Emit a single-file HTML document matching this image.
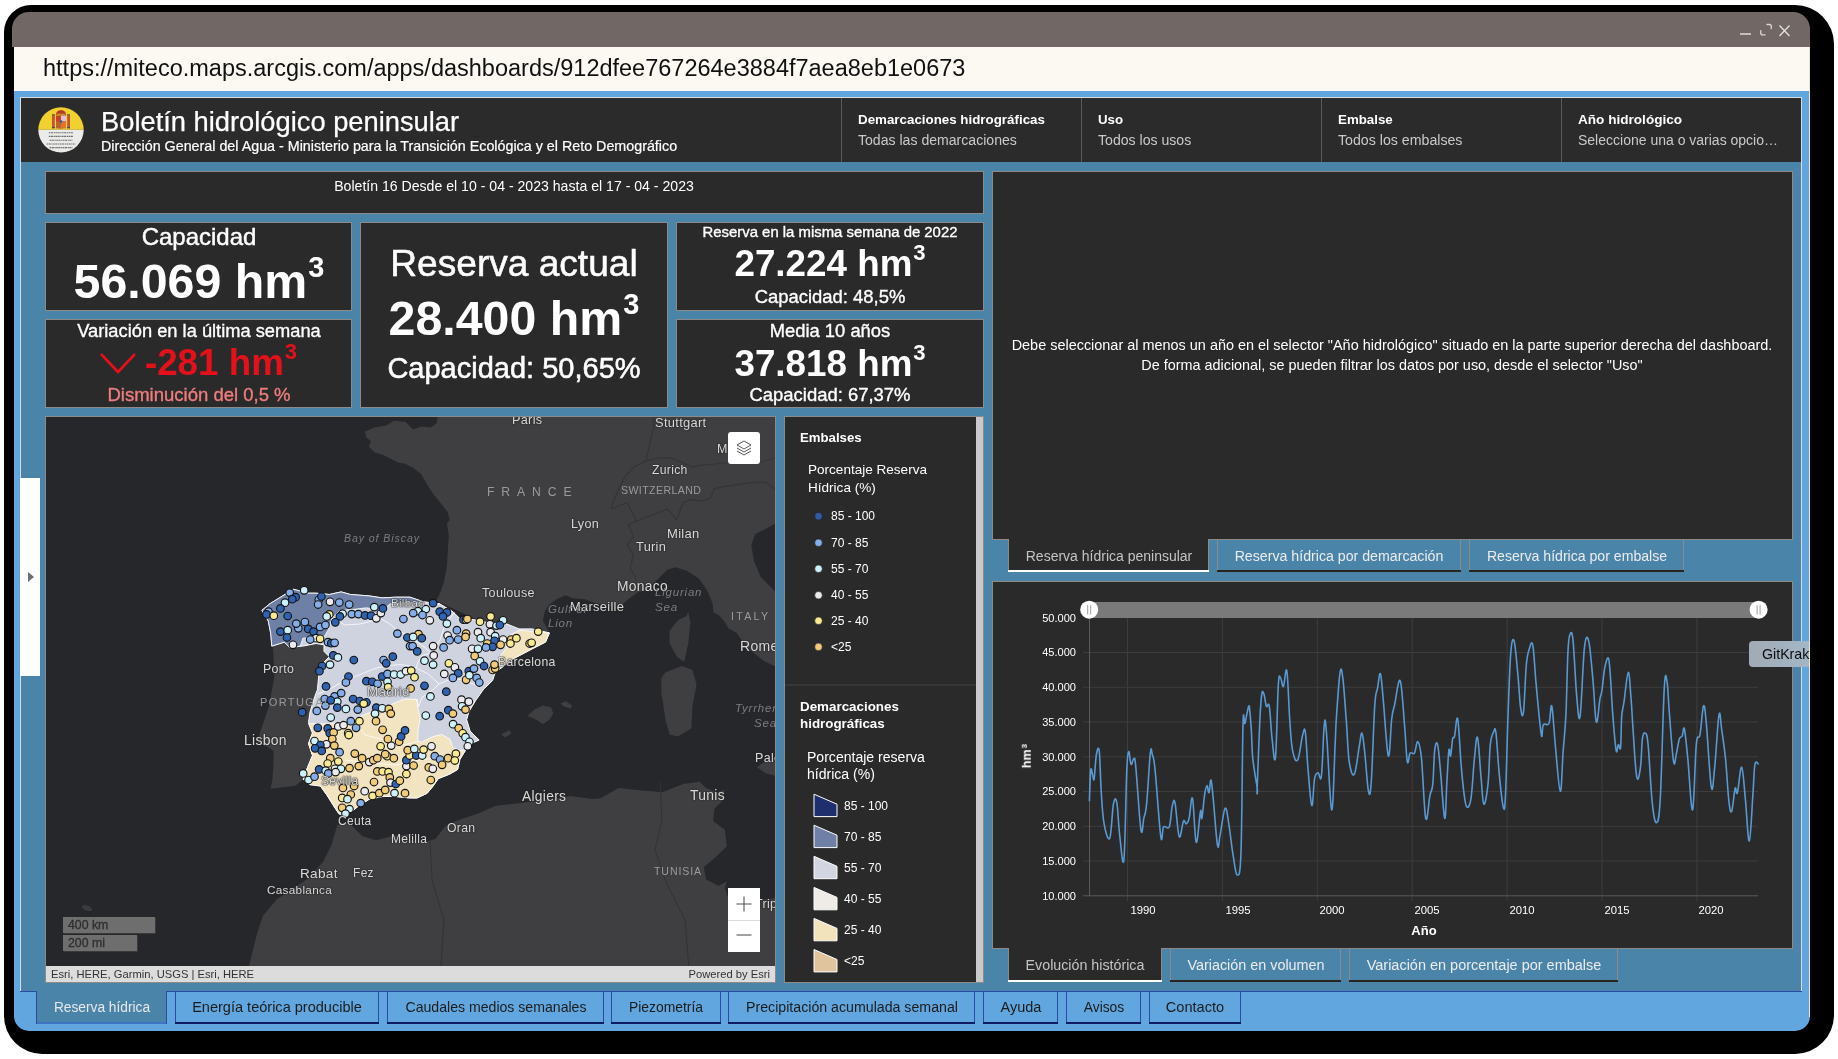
<!DOCTYPE html><html><head><meta charset="utf-8"><style>
html,body{margin:0;padding:0;}
body{width:1838px;height:1059px;overflow:hidden;position:relative;background:#fff;font-family:"Liberation Sans",sans-serif;}
.r{position:absolute;}
.t{position:absolute;white-space:nowrap;will-change:transform;}
svg{position:absolute;}
</style></head><body>
<div class="r" style="left:4px;top:5px;width:1830px;height:1049px;background:#000;border-radius:27px 39px 39px 38px;"></div>
<div class="r" style="left:12px;top:12px;width:1798px;height:35px;background:#716866;border-radius:17px 17px 0 0;"></div>
<svg style="left:1730px;top:18px" width="70" height="26" viewBox="1730 18 70 26">
<line x1="1740" y1="34" x2="1751" y2="34" stroke="#d8d4d2" stroke-width="1.6"/>
<path d="M1760.8 30.6 V33 Q1760.8 34.9 1762.7 34.9 H1765 M1767 24.5 H1769.4 Q1771.3 24.5 1771.3 26.4 V28.6" fill="none" stroke="#d8d4d2" stroke-width="1.35" stroke-linecap="round"/>
<path d="M1779.5 25.5 L1789.5 36 M1789.5 25.5 L1779.5 36" stroke="#e8e6e4" stroke-width="1.2"/>
</svg>
<div class="r" style="left:14px;top:47px;width:1796px;height:44px;background:#fcf9f2;"></div>
<div class="t" style="left:43.0px;top:57.1px;font-size:23.5px;line-height:23.5px;color:#111;font-weight:400;">https://miteco.maps.arcgis.com/apps/dashboards/912dfee767264e3884f7aea8eb1e0673</div>
<div class="r" style="left:14px;top:91px;width:1796px;height:940px;background:#62a6e0;border-radius:0 0 15px 15px;"></div>
<div class="r" style="left:1809px;top:47px;width:1px;height:970px;background:#e6e2da;"></div>
<div class="r" style="left:20px;top:97px;width:1782px;height:894px;background:#dcdcdc;"></div>
<div class="r" style="left:21px;top:98px;width:1780px;height:64px;background:#2b2b2b;"></div>
<div class="r" style="left:21px;top:162px;width:1780px;height:829px;background:#4b84a9;"></div>
<svg style="left:36px;top:105px" width="50" height="50" viewBox="0 0 50 50">
<defs><clipPath id="lc"><circle cx="25" cy="24.9" r="22.7"/></clipPath></defs>
<g clip-path="url(#lc)">
<rect x="0" y="0" width="50" height="24.8" fill="#f1d12f"/>
<rect x="0" y="24.8" width="50" height="26" fill="#ebebea"/>
</g>
<path d="M20 10.4 H30 V19 Q30 23.4 25 23.6 Q20 23.4 20 19 Z" fill="#c9402a"/>
<rect x="25" y="10.4" width="5" height="6" fill="#d8c6d6"/>
<rect x="20" y="16.4" width="5" height="7" fill="#b8642e"/>
<rect x="25" y="16.4" width="5" height="7" fill="#e0742a"/>
<circle cx="25" cy="16.6" r="1.3" fill="#3a5a90"/>
<path d="M19.8 10.2 Q20 5.5 25 5 Q30 5.5 30.2 10.2 Z" fill="#b83a28"/>
<rect x="20.5" y="8.6" width="9" height="1.6" fill="#c0902a"/>
<rect x="16" y="10" width="2.8" height="13" fill="#c8503a"/>
<rect x="31.2" y="10" width="2.8" height="13" fill="#c8503a"/>
<rect x="16" y="9" width="2.8" height="2" fill="#807030"/>
<rect x="31.2" y="9" width="2.8" height="2" fill="#807030"/>
<rect x="16" y="22" width="2.8" height="1.4" fill="#3a4a70"/>
<rect x="31.2" y="22" width="2.8" height="1.4" fill="#3a4a70"/>
<g stroke="#6e6e6e" stroke-width="1.1" stroke-dasharray="1.6 0.5 2.2 0.6 1.2 0.5">
<line x1="12.8" y1="27.8" x2="37.2" y2="27.8"/>
<line x1="12.8" y1="31.4" x2="37.2" y2="31.4"/>
<line x1="13.6" y1="35.2" x2="36.4" y2="35.2"/>
<line x1="10.6" y1="39" x2="39.4" y2="39"/>
<line x1="13.6" y1="42.6" x2="36.4" y2="42.6"/>
</g></svg>
<div class="t" style="left:101.0px;top:108.3px;font-size:27.3px;line-height:27.3px;color:#fff;font-weight:400;-webkit-text-stroke:0.25px currentColor;">Boletín hidrológico peninsular</div>
<div class="t" style="left:101.0px;top:138.5px;font-size:14.3px;line-height:14.3px;color:#fff;font-weight:400;-webkit-text-stroke:0.2px currentColor;">Dirección General del Agua - Ministerio para la Transición Ecológica y el Reto Demográfico</div>
<div class="r" style="left:841px;top:98px;width:1px;height:64px;background:#5a5a5a;"></div>
<div class="t" style="left:858.0px;top:112.7px;font-size:13.35px;line-height:13.35px;color:#fff;font-weight:700;">Demarcaciones hidrográficas</div>
<div class="t" style="left:858.0px;top:133.1px;font-size:14.09px;line-height:14.09px;color:#c9c9c9;font-weight:400;">Todas las demarcaciones</div>
<div class="r" style="left:1081px;top:98px;width:1px;height:64px;background:#5a5a5a;"></div>
<div class="t" style="left:1098.0px;top:112.7px;font-size:13.3px;line-height:13.3px;color:#fff;font-weight:700;">Uso</div>
<div class="t" style="left:1098.0px;top:133.1px;font-size:14.1px;line-height:14.1px;color:#c9c9c9;font-weight:400;">Todos los usos</div>
<div class="r" style="left:1321px;top:98px;width:1px;height:64px;background:#5a5a5a;"></div>
<div class="t" style="left:1338.0px;top:112.7px;font-size:13.32px;line-height:13.32px;color:#fff;font-weight:700;">Embalse</div>
<div class="t" style="left:1338.0px;top:133.0px;font-size:14.18px;line-height:14.18px;color:#c9c9c9;font-weight:400;">Todos los embalses</div>
<div class="r" style="left:1561px;top:98px;width:1px;height:64px;background:#5a5a5a;"></div>
<div class="t" style="left:1578.0px;top:112.5px;font-size:13.59px;line-height:13.59px;color:#fff;font-weight:700;">Año hidrológico</div>
<div class="t" style="left:1578.0px;top:133.1px;font-size:14.0px;line-height:14.0px;color:#c9c9c9;font-weight:400;">Seleccione una o varias opcio…</div>
<div class="r" style="left:45px;top:171px;width:939px;height:43px;background:#8d8a88;"></div>
<div class="r" style="left:46px;top:172px;width:937px;height:41px;background:#2a2a2a;"></div>
<div class="t" style="left:-86.0px;width:1200px;text-align:center;top:178.8px;font-size:14.1px;line-height:14.1px;color:#fff;font-weight:400;">Boletín 16 Desde el 10 - 04 - 2023 hasta el 17 - 04 - 2023</div>
<div class="r" style="left:45px;top:222px;width:307px;height:89px;background:#8d8a88;"></div>
<div class="r" style="left:46px;top:223px;width:305px;height:87px;background:#2a2a2a;"></div>
<div class="t" style="left:-401.5px;width:1200px;text-align:center;top:225.1px;font-size:24.0px;line-height:24.0px;color:#fff;font-weight:400;-webkit-text-stroke:0.45px currentColor;">Capacidad</div>
<div class="t" style="left:-401.5px;width:1200px;text-align:center;top:256.8px;font-size:48.3px;line-height:48.3px;color:#fff;font-weight:700;">56.069 hm<sup style="font-size:0.6em;vertical-align:0;position:relative;top:-0.72em;margin-left:0.04em">3</sup></div>
<div class="r" style="left:45px;top:319px;width:307px;height:89px;background:#8d8a88;"></div>
<div class="r" style="left:46px;top:320px;width:305px;height:87px;background:#2a2a2a;"></div>
<div class="t" style="left:-401.5px;width:1200px;text-align:center;top:321.8px;font-size:18.3px;line-height:18.3px;color:#fff;font-weight:400;-webkit-text-stroke:0.35px currentColor;">Variación en la última semana</div>
<div class="t" style="left:-379.0px;width:1200px;text-align:center;top:344.8px;font-size:36.8px;line-height:36.8px;color:#e4111b;font-weight:700;">-281 hm<sup style="font-size:0.6em;vertical-align:0;position:relative;top:-0.72em;margin-left:0.04em">3</sup></div>
<svg style="left:98px;top:350px" width="42" height="28" viewBox="0 0 42 28"><path d="M3 4 L20 22 L37 4" fill="none" stroke="#e4111b" stroke-width="2.6"/></svg>
<div class="t" style="left:-401.5px;width:1200px;text-align:center;top:385.8px;font-size:18.5px;line-height:18.5px;color:#f07d7d;font-weight:400;-webkit-text-stroke:0.35px currentColor;">Disminución del 0,5 %</div>
<div class="r" style="left:360px;top:222px;width:308px;height:186px;background:#8d8a88;"></div>
<div class="r" style="left:361px;top:223px;width:306px;height:184px;background:#2a2a2a;"></div>
<div class="t" style="left:-86.5px;width:1200px;text-align:center;top:245.4px;font-size:37.1px;line-height:37.1px;color:#fff;font-weight:400;-webkit-text-stroke:0.55px currentColor;">Reserva actual</div>
<div class="t" style="left:-86.5px;width:1200px;text-align:center;top:293.6px;font-size:48.3px;line-height:48.3px;color:#fff;font-weight:700;">28.400 hm<sup style="font-size:0.6em;vertical-align:0;position:relative;top:-0.72em;margin-left:0.04em">3</sup></div>
<div class="t" style="left:-86.5px;width:1200px;text-align:center;top:354.0px;font-size:29.0px;line-height:29.0px;color:#fff;font-weight:400;-webkit-text-stroke:0.55px currentColor;">Capacidad: 50,65%</div>
<div class="r" style="left:676px;top:222px;width:308px;height:89px;background:#8d8a88;"></div>
<div class="r" style="left:677px;top:223px;width:306px;height:87px;background:#2a2a2a;"></div>
<div class="t" style="left:230.0px;width:1200px;text-align:center;top:224.6px;font-size:14.9px;line-height:14.9px;color:#fff;font-weight:400;-webkit-text-stroke:0.35px currentColor;">Reserva en la misma semana de 2022</div>
<div class="t" style="left:230.0px;width:1200px;text-align:center;top:246.2px;font-size:36.8px;line-height:36.8px;color:#fff;font-weight:700;">27.224 hm<sup style="font-size:0.6em;vertical-align:0;position:relative;top:-0.72em;margin-left:0.04em">3</sup></div>
<div class="t" style="left:230.0px;width:1200px;text-align:center;top:287.6px;font-size:18.43px;line-height:18.43px;color:#fff;font-weight:400;-webkit-text-stroke:0.35px currentColor;">Capacidad: 48,5%</div>
<div class="r" style="left:676px;top:319px;width:308px;height:89px;background:#8d8a88;"></div>
<div class="r" style="left:677px;top:320px;width:306px;height:87px;background:#2a2a2a;"></div>
<div class="t" style="left:230.0px;width:1200px;text-align:center;top:321.7px;font-size:18.38px;line-height:18.38px;color:#fff;font-weight:400;-webkit-text-stroke:0.35px currentColor;">Media 10 años</div>
<div class="t" style="left:230.0px;width:1200px;text-align:center;top:346.3px;font-size:36.8px;line-height:36.8px;color:#fff;font-weight:700;">37.818 hm<sup style="font-size:0.6em;vertical-align:0;position:relative;top:-0.72em;margin-left:0.04em">3</sup></div>
<div class="t" style="left:230.0px;width:1200px;text-align:center;top:386.1px;font-size:18.47px;line-height:18.47px;color:#fff;font-weight:400;-webkit-text-stroke:0.35px currentColor;">Capacidad: 67,37%</div>
<div class="r" style="left:45px;top:416px;width:731px;height:567px;background:#8d8a88;"></div>
<div class="r" style="left:46px;top:417px;width:729px;height:565px;background:#26272b;"></div>
<svg style="left:46px;top:417px" width="729" height="565" viewBox="46 417 729 565">
<rect x="46" y="417" width="729" height="565" fill="#26272b"/>
<path d="M438.2 416.0 L776.0 416.0 L776.0 523.3 L766.0 528.7 L755.3 534.0 L751.3 544.8 L754.0 560.9 L760.7 577.0 L771.4 587.7 L776.0 593.0 L776.0 666.5 L771.5 664.7 L764.0 661.0 L756.4 654.9 L748.9 648.9 L741.3 639.8 L736.8 633.0 L728.5 628.5 L724.7 621.7 L718.7 614.9 L713.4 612.6 L712.6 603.6 L709.6 596.0 L706.5 589.4 L698.7 578.6 L686.9 570.8 L675.2 567.3 L667.3 569.8 L657.5 579.6 L647.7 589.4 L637.9 592.3 L628.1 599.2 L623.3 604.1 L608.6 606.0 L594.8 603.1 L585.0 599.2 L572.3 598.2 L565.5 595.3 L556.7 599.2 L549.8 604.1 L544.9 610.9 L542.9 620.7 L548.8 631.2 L520.0 640.0 L441.7 603.2 L436.3 600.8 L440.1 593.1 L444.0 581.6 L446.9 566.2 L447.8 550.8 L448.8 535.4 L446.9 523.8 L449.7 520.0 L447.8 512.3 L440.1 502.6 L432.4 493.0 L426.6 483.4 L420.9 473.8 L413.2 468.0 L405.5 464.1 L397.7 462.2 L390.0 458.4 L382.4 454.5 L374.7 452.6 L368.9 446.8 L370.8 441.0 L366.0 437.2 L365.0 431.4 L374.7 427.6 L386.2 425.6 L393.9 420.8 L405.5 421.8 L413.2 429.5 L420.9 426.6 L430.5 427.6 L436.3 423.7 L438.2 416.0 Z" fill="#3f3f42" />
<path d="M261.9 610.4 L269.8 603.8 L287.0 593.2 L293.6 589.3 L308.2 593.2 L316.1 593.2 L329.3 594.5 L341.2 591.9 L350.5 594.5 L369.0 595.9 L382.2 597.9 L395.5 597.2 L410.0 597.2 L423.8 601.9 L439.7 603.8 L452.9 611.7 L459.5 618.3 L474.0 619.7 L486.0 622.3 L505.8 623.6 L519.0 628.9 L532.2 628.9 L549.4 632.9 L545.5 642.1 L532.2 648.8 L512.4 659.3 L495.2 672.6 L492.6 680.5 L483.7 689.1 L475.7 700.4 L468.9 711.7 L466.7 719.7 L470.1 731.0 L479.1 740.1 L471.2 743.5 L465.5 750.3 L459.9 759.3 L457.6 769.5 L449.7 774.1 L438.3 778.6 L432.7 786.6 L427.0 793.4 L416.8 798.0 L409.0 797.9 L395.8 796.5 L382.6 796.5 L369.3 799.2 L358.8 805.8 L352.1 811.1 L345.5 816.4 L338.9 813.7 L333.6 805.8 L327.0 795.2 L320.4 786.0 L309.8 784.6 L303.2 779.3 L303.2 779.3 L295.4 785.7 L279.5 787.7 L270.6 788.7 L272.5 778.8 L273.5 762.9 L273.5 751.0 L267.6 747.1 L257.7 743.1 L259.7 733.2 L264.6 719.3 L268.6 707.4 L271.6 691.6 L274.5 675.7 L273.5 655.9 L272.5 640.0 L271.8 646.1 L270.8 633.8 L268.3 621.0 Z" fill="#3f3f42" />
<path d="M249.0 965.7 L251.8 954.7 L257.3 932.6 L262.8 916.1 L276.6 899.5 L293.1 888.5 L309.7 877.5 L323.5 860.9 L331.7 844.4 L337.3 825.1 L348.3 822.3 L362.1 836.1 L375.9 840.3 L392.4 836.1 L415.0 833.4 L405.0 838.9 L421.5 843.0 L435.3 838.9 L446.4 825.1 L460.1 819.6 L476.7 814.1 L496.0 805.8 L520.8 803.0 L542.9 800.3 L570.4 796.1 L592.5 798.9 L600.0 798.4 L618.7 788.0 L637.4 790.1 L662.3 792.2 L683.1 783.9 L699.7 781.8 L706.0 788.0 L716.4 792.2 L724.7 790.1 L722.6 800.5 L714.3 808.8 L713.2 821.3 L724.7 829.6 L726.8 846.2 L716.4 856.6 L703.9 867.0 L706.0 879.5 L718.4 885.7 L726.8 881.6 L724.7 887.8 L728.8 900.0 L745.0 902.0 L776.0 898.0 L776.0 982.0 L249.0 982.0 Z" fill="#3f3f42" />
<ellipse cx="87" cy="908" rx="5.5" ry="2.6" transform="rotate(20 87 908)" fill="#3a3a3d"/>
<path d="M669.6 630.7 L677.9 620.3 L686.3 616.1 L688.3 612.0 L690.4 622.3 L688.3 643.1 L684.2 661.8 L677.9 657.7 L673.8 651.4 L669.6 643.1 Z" fill="#3f3f42" />
<path d="M661.3 678.5 L665.5 672.2 L682.1 666.0 L692.5 670.1 L696.6 684.7 L692.5 705.5 L691.4 728.3 L677.9 736.6 L669.6 734.6 L665.5 720.0 L663.4 705.5 L661.3 693.0 Z" fill="#3f3f42" />
<path d="M527.3 715.9 L534.5 709.6 L542.9 705.5 L551.2 707.5 L553.3 713.8 L549.1 720.0 L542.9 724.2 L536.6 720.0 Z" fill="#3f3f42" />
<path d="M560.5 703.4 L565.7 701.3 L572.0 705.5 L570.9 708.6 L563.6 706.5 Z" fill="#3f3f42" />
<path d="M501.5 734.1 L509.8 730.0 L511.1 734.1 L504.3 737.4 Z" fill="#3f3f42" />
<path d="M756.9 767.3 L764.2 762.1 L776.0 759.0 L776.0 775.6 L766.2 773.5 Z" fill="#3f3f42" />
<path d="M653.5 416 L653.5 428.4 L648.9 447 L645.8 460.9" fill="none" stroke="#353538" stroke-width="1.2"/>
<path d="M645.8 460.9 L659.7 457.8 L670.5 457.8 L682.9 462.5 L692.2 467.1 L698.4 465.6 L713.9 464 L729.4 462.5 L744.9 460.9 L760 462 L776 458" fill="none" stroke="#353538" stroke-width="1.2"/>
<path d="M776 490 L766 482 L752.6 482.6 L729.4 485.7 L713.9 488.8 L710.8 498.1 L701.5 501.2 L690.7 499.6 L682.9 502.7 L676.7 519.8 L667.4 508.9 L651.9 515.1 L636.5 521.3 L627.2 502.7 L611.7 508.9 L613.2 501.2 L624.1 477.9 L633.4 467.1 L645.8 460.9" fill="none" stroke="#353538" stroke-width="1.2"/>
<path d="M636.5 521.3 L628.7 524.4 L633.4 536.8 L627.2 544.5 L633.4 555.4 L630.3 567.8 L636.5 580" fill="none" stroke="#353538" stroke-width="1.2"/>
<path d="M660 782 L662 820 L655 850 L665 880 L685 920 L690 982" fill="none" stroke="#333336" stroke-width="1"/>
<path d="M430 840 L432 880 L444 920 L440 982" fill="none" stroke="#333336" stroke-width="1"/>
<path d="M261.9 610.4 L269.8 603.8 L287.0 593.2 L293.6 589.3 L308.2 593.2 L316.1 593.2 L329.3 594.5 L341.2 591.9 L350.5 594.5 L369.0 595.9 L382.2 597.9 L395.5 597.2 L410.0 597.2 L423.8 601.9 L439.7 603.8 L452.9 611.7 L459.5 618.3 L474.0 619.7 L486.0 622.3 L505.8 623.6 L519.0 628.9 L532.2 628.9 L549.4 632.9 L545.5 642.1 L532.2 648.8 L512.4 659.3 L495.2 672.6 L492.6 680.5 L483.7 689.1 L475.7 700.4 L468.9 711.7 L466.7 719.7 L470.1 731.0 L479.1 740.1 L471.2 743.5 L465.5 750.3 L459.9 759.3 L457.6 769.5 L449.7 774.1 L438.3 778.6 L432.7 786.6 L427.0 793.4 L416.8 798.0 L409.0 797.9 L395.8 796.5 L382.6 796.5 L369.3 799.2 L358.8 805.8 L352.1 811.1 L345.5 816.4 L338.9 813.7 L333.6 805.8 L327.0 795.2 L320.4 786.0 L309.8 784.6 L303.2 779.3 L305.9 771.4 L312.5 755.5 L308.5 743.6 L312.5 733.0 L308.5 722.5 L310.0 712.0 L314.8 696.4 L317.4 689.8 L318.8 675.2 L320.1 666.0 L329.3 656.7 L324.0 651.4 L324.0 644.8 L316.1 643.5 L302.9 646.1 L289.7 647.4 L284.4 642.1 L271.8 646.1 L270.8 633.8 L268.3 621.0 Z" fill="#cfd3e0" stroke="#ffffff" stroke-width="1"/>
<path d="M261.9 610.4 L269.8 603.8 L287.0 593.2 L293.6 589.3 L308.2 593.2 L316.1 593.2 L329.3 594.5 L341.2 591.9 L350.5 594.5 L369.0 595.9 L382.2 597.9 L395.5 597.2 L410.0 597.2 L423.8 601.9 L439.7 603.8 L410.0 602.5 L390.2 603.8 L382.2 610.4 L366.4 607.8 L355.8 609.1 L339.9 610.4 L332.0 618.3 L328.0 630.2 L324.0 636.9 L302.9 638.2 L300.2 646.1 L289.7 647.4 L284.4 642.1 L271.8 646.1 L270.8 633.8 L268.3 621.0 Z" fill="#6f80a7" stroke="#ffffff" stroke-width="0.8"/>
<path d="M308.5 723.5 L329.7 724.0 L353.5 719.5 L366.0 714.0 L382.6 707.9 L395.8 702.6 L404.0 699.0 L416.8 699.3 L417.9 708.3 L420.2 717.4 L417.9 731.0 L418.0 741.2 L421.3 742.3 L432.7 736.7 L441.7 734.4 L449.7 739.0 L453.1 748.0 L459.9 750.3 L465.5 750.3 L459.9 759.3 L457.6 769.5 L449.7 774.1 L438.3 778.6 L432.7 786.6 L427.0 793.4 L416.8 798.0 L409.0 797.9 L395.8 796.5 L382.6 796.5 L369.3 799.2 L358.8 805.8 L352.1 811.1 L345.5 816.4 L338.9 813.7 L333.6 805.8 L327.0 795.2 L320.4 786.0 L309.8 784.6 L303.2 779.3 L305.9 771.4 L312.5 755.5 L308.5 743.6 L312.5 733.0 Z" fill="#f2e3c1" stroke="#ffffff" stroke-width="0.8"/>
<path d="M549.4 632.9 L519.0 630.2 L509.7 635.5 L505.8 648.8 L497.9 659.3 L492.6 672.6 L495.2 672.6 L512.4 659.3 L532.2 648.8 L545.5 642.1 Z" fill="#f2e3c1" stroke="#ffffff" stroke-width="0.8"/>
<path d="M381.0 619.0 L388.0 622.7 L393.7 627.2 L399.3 631.7 L406.0 634.0 L418.6 643.0 L426.6 648.7 L431.0 653.3 L422.0 655.5 L417.5 663.5 L416.3 668.0" fill="none" stroke="#ffffff" stroke-width="0.9" opacity="0.85"/>
<path d="M318.0 694.0 L331.3 688.4 L342.7 681.6 L354.0 677.0 L365.3 672.5 L376.7 668.0 L388.0 665.7 L399.3 664.6 L408.4 665.7 L416.3 668.0" fill="none" stroke="#ffffff" stroke-width="0.9" opacity="0.85"/>
<path d="M416.3 668.0 L427.7 673.7 L439.0 683.9 L433.4 689.5 L422.0 697.5 L418.6 706.6 L417.0 699.0" fill="none" stroke="#ffffff" stroke-width="0.9" opacity="0.85"/>
<path d="M439.0 683.9 L450.4 679.3 L461.7 679.3 L467.4 681.6 L478.0 686.0" fill="none" stroke="#ffffff" stroke-width="0.9" opacity="0.85"/>
<path d="M332.0 618.3 L345.0 625.0 L360.0 624.0 L375.0 620.0 L381.0 619.0" fill="none" stroke="#ffffff" stroke-width="0.9" opacity="0.85"/>
<path d="M454.4 612.1 L445.0 625.0 L440.0 640.0 L431.0 653.3" fill="none" stroke="#ffffff" stroke-width="0.9" opacity="0.85"/>
<path d="M355.0 721.0 L365.0 735.0 L385.0 740.0 L405.0 745.0 L418.0 741.2" fill="none" stroke="#ffffff" stroke-width="0.9" opacity="0.85"/>
<path d="M345.0 760.0 L370.0 763.0 L395.0 765.0 L420.0 760.0 L440.0 757.0 L459.9 759.3" fill="none" stroke="#ffffff" stroke-width="0.9" opacity="0.85"/>
<circle cx="289.7" cy="592.6" r="3.8" fill="#85ade8" stroke="#141414" stroke-width="1.15"/>
<circle cx="304.2" cy="590.3" r="3.8" fill="#cdf1fb" stroke="#141414" stroke-width="1.15"/>
<circle cx="295.6" cy="597.2" r="3.8" fill="#3062b2" stroke="#141414" stroke-width="1.15"/>
<circle cx="292.3" cy="599.2" r="3.8" fill="#3062b2" stroke="#141414" stroke-width="1.15"/>
<circle cx="285.0" cy="602.7" r="3.8" fill="#cdf1fb" stroke="#141414" stroke-width="1.15"/>
<circle cx="280.4" cy="608.4" r="3.8" fill="#3062b2" stroke="#141414" stroke-width="1.15"/>
<circle cx="268.5" cy="611.7" r="3.8" fill="#85ade8" stroke="#141414" stroke-width="1.15"/>
<circle cx="266.5" cy="614.4" r="3.8" fill="#3062b2" stroke="#141414" stroke-width="1.15"/>
<circle cx="273.8" cy="615.7" r="3.8" fill="#f7ea90" stroke="#141414" stroke-width="1.15"/>
<circle cx="287.7" cy="616.0" r="3.8" fill="#3062b2" stroke="#141414" stroke-width="1.15"/>
<circle cx="318.8" cy="599.8" r="3.8" fill="#85ade8" stroke="#141414" stroke-width="1.15"/>
<circle cx="321.4" cy="596.5" r="3.8" fill="#3062b2" stroke="#141414" stroke-width="1.15"/>
<circle cx="318.1" cy="604.5" r="3.8" fill="#85ade8" stroke="#141414" stroke-width="1.15"/>
<circle cx="330.0" cy="601.8" r="3.8" fill="#ebebef" stroke="#141414" stroke-width="1.15"/>
<circle cx="339.3" cy="602.5" r="3.8" fill="#85ade8" stroke="#141414" stroke-width="1.15"/>
<circle cx="349.2" cy="604.5" r="3.8" fill="#85ade8" stroke="#141414" stroke-width="1.15"/>
<circle cx="329.3" cy="614.4" r="3.8" fill="#f7ea90" stroke="#141414" stroke-width="1.15"/>
<circle cx="326.7" cy="616.4" r="3.8" fill="#cdf1fb" stroke="#141414" stroke-width="1.15"/>
<circle cx="342.6" cy="613.7" r="3.8" fill="#cdf1fb" stroke="#141414" stroke-width="1.15"/>
<circle cx="339.9" cy="616.4" r="3.8" fill="#3062b2" stroke="#141414" stroke-width="1.15"/>
<circle cx="335.3" cy="622.3" r="3.8" fill="#3062b2" stroke="#141414" stroke-width="1.15"/>
<circle cx="351.8" cy="614.1" r="3.8" fill="#85ade8" stroke="#141414" stroke-width="1.15"/>
<circle cx="358.4" cy="614.1" r="3.8" fill="#85ade8" stroke="#141414" stroke-width="1.15"/>
<circle cx="365.0" cy="615.4" r="3.8" fill="#3062b2" stroke="#141414" stroke-width="1.15"/>
<circle cx="371.0" cy="615.7" r="3.8" fill="#3062b2" stroke="#141414" stroke-width="1.15"/>
<circle cx="376.3" cy="618.3" r="3.8" fill="#ebebef" stroke="#141414" stroke-width="1.15"/>
<circle cx="380.9" cy="613.1" r="3.8" fill="#ebebef" stroke="#141414" stroke-width="1.15"/>
<circle cx="374.3" cy="607.1" r="3.8" fill="#cdf1fb" stroke="#141414" stroke-width="1.15"/>
<circle cx="382.9" cy="608.4" r="3.8" fill="#3062b2" stroke="#141414" stroke-width="1.15"/>
<circle cx="403.4" cy="619.0" r="3.8" fill="#85ade8" stroke="#141414" stroke-width="1.15"/>
<circle cx="397.4" cy="633.6" r="3.8" fill="#85ade8" stroke="#141414" stroke-width="1.15"/>
<circle cx="407.4" cy="637.5" r="3.8" fill="#3062b2" stroke="#141414" stroke-width="1.15"/>
<circle cx="410.0" cy="646.1" r="3.8" fill="#85ade8" stroke="#141414" stroke-width="1.15"/>
<circle cx="298.3" cy="628.3" r="3.8" fill="#85ade8" stroke="#141414" stroke-width="1.15"/>
<circle cx="304.9" cy="622.0" r="3.8" fill="#85ade8" stroke="#141414" stroke-width="1.15"/>
<circle cx="280.4" cy="631.6" r="3.8" fill="#3062b2" stroke="#141414" stroke-width="1.15"/>
<circle cx="287.7" cy="630.2" r="3.8" fill="#cdf1fb" stroke="#141414" stroke-width="1.15"/>
<circle cx="287.0" cy="637.5" r="3.8" fill="#3062b2" stroke="#141414" stroke-width="1.15"/>
<circle cx="296.3" cy="623.6" r="3.8" fill="#85ade8" stroke="#141414" stroke-width="1.15"/>
<circle cx="308.2" cy="628.9" r="3.8" fill="#3062b2" stroke="#141414" stroke-width="1.15"/>
<circle cx="313.5" cy="631.6" r="3.8" fill="#3062b2" stroke="#141414" stroke-width="1.15"/>
<circle cx="320.1" cy="626.9" r="3.8" fill="#85ade8" stroke="#141414" stroke-width="1.15"/>
<circle cx="325.4" cy="625.0" r="3.8" fill="#85ade8" stroke="#141414" stroke-width="1.15"/>
<circle cx="316.1" cy="638.2" r="3.8" fill="#ebebef" stroke="#141414" stroke-width="1.15"/>
<circle cx="320.1" cy="638.8" r="3.8" fill="#f7ea90" stroke="#141414" stroke-width="1.15"/>
<circle cx="310.2" cy="639.5" r="3.8" fill="#85ade8" stroke="#141414" stroke-width="1.15"/>
<circle cx="293.0" cy="644.8" r="3.8" fill="#ebebef" stroke="#141414" stroke-width="1.15"/>
<circle cx="328.0" cy="642.1" r="3.8" fill="#85ade8" stroke="#141414" stroke-width="1.15"/>
<circle cx="331.3" cy="643.2" r="3.8" fill="#3062b2" stroke="#141414" stroke-width="1.15"/>
<circle cx="334.6" cy="642.8" r="3.8" fill="#85ade8" stroke="#141414" stroke-width="1.15"/>
<circle cx="333.3" cy="655.4" r="3.8" fill="#3062b2" stroke="#141414" stroke-width="1.15"/>
<circle cx="337.9" cy="657.4" r="3.8" fill="#cdf1fb" stroke="#141414" stroke-width="1.15"/>
<circle cx="322.1" cy="666.0" r="3.8" fill="#3062b2" stroke="#141414" stroke-width="1.15"/>
<circle cx="319.4" cy="671.2" r="3.8" fill="#3062b2" stroke="#141414" stroke-width="1.15"/>
<circle cx="330.0" cy="664.6" r="3.8" fill="#cdf1fb" stroke="#141414" stroke-width="1.15"/>
<circle cx="353.8" cy="660.0" r="3.8" fill="#3062b2" stroke="#141414" stroke-width="1.15"/>
<circle cx="383.6" cy="660.0" r="3.8" fill="#85ade8" stroke="#141414" stroke-width="1.15"/>
<circle cx="386.2" cy="663.3" r="3.8" fill="#3062b2" stroke="#141414" stroke-width="1.15"/>
<circle cx="392.8" cy="656.7" r="3.8" fill="#3062b2" stroke="#141414" stroke-width="1.15"/>
<circle cx="348.5" cy="676.5" r="3.8" fill="#3062b2" stroke="#141414" stroke-width="1.15"/>
<circle cx="345.9" cy="682.5" r="3.8" fill="#85ade8" stroke="#141414" stroke-width="1.15"/>
<circle cx="326.0" cy="686.4" r="3.8" fill="#3062b2" stroke="#141414" stroke-width="1.15"/>
<circle cx="366.4" cy="681.2" r="3.8" fill="#3062b2" stroke="#141414" stroke-width="1.15"/>
<circle cx="372.3" cy="681.8" r="3.8" fill="#3062b2" stroke="#141414" stroke-width="1.15"/>
<circle cx="377.6" cy="683.8" r="3.8" fill="#85ade8" stroke="#141414" stroke-width="1.15"/>
<circle cx="382.2" cy="676.5" r="3.8" fill="#3062b2" stroke="#141414" stroke-width="1.15"/>
<circle cx="387.5" cy="673.9" r="3.8" fill="#85ade8" stroke="#141414" stroke-width="1.15"/>
<circle cx="394.1" cy="674.5" r="3.8" fill="#cdf1fb" stroke="#141414" stroke-width="1.15"/>
<circle cx="400.7" cy="674.5" r="3.8" fill="#cdf1fb" stroke="#141414" stroke-width="1.15"/>
<circle cx="406.0" cy="671.2" r="3.8" fill="#ebebef" stroke="#141414" stroke-width="1.15"/>
<circle cx="387.5" cy="681.8" r="3.8" fill="#cdf1fb" stroke="#141414" stroke-width="1.15"/>
<circle cx="388.2" cy="687.1" r="3.8" fill="#f7ea90" stroke="#141414" stroke-width="1.15"/>
<circle cx="324.7" cy="699.0" r="3.8" fill="#85ade8" stroke="#141414" stroke-width="1.15"/>
<circle cx="334.6" cy="696.4" r="3.8" fill="#85ade8" stroke="#141414" stroke-width="1.15"/>
<circle cx="341.2" cy="693.1" r="3.8" fill="#85ade8" stroke="#141414" stroke-width="1.15"/>
<circle cx="337.3" cy="701.7" r="3.8" fill="#cdf1fb" stroke="#141414" stroke-width="1.15"/>
<circle cx="330.7" cy="700.3" r="3.8" fill="#3062b2" stroke="#141414" stroke-width="1.15"/>
<circle cx="353.1" cy="699.0" r="3.8" fill="#3062b2" stroke="#141414" stroke-width="1.15"/>
<circle cx="359.8" cy="701.0" r="3.8" fill="#3062b2" stroke="#141414" stroke-width="1.15"/>
<circle cx="366.4" cy="702.3" r="3.8" fill="#3062b2" stroke="#141414" stroke-width="1.15"/>
<circle cx="363.7" cy="703.6" r="3.8" fill="#f7ea90" stroke="#141414" stroke-width="1.15"/>
<circle cx="345.9" cy="708.9" r="3.8" fill="#cdf1fb" stroke="#141414" stroke-width="1.15"/>
<circle cx="357.8" cy="709.6" r="3.8" fill="#85ade8" stroke="#141414" stroke-width="1.15"/>
<circle cx="337.3" cy="707.6" r="3.8" fill="#3062b2" stroke="#141414" stroke-width="1.15"/>
<circle cx="325.4" cy="705.6" r="3.8" fill="#85ade8" stroke="#141414" stroke-width="1.15"/>
<circle cx="316.8" cy="710.9" r="3.8" fill="#85ade8" stroke="#141414" stroke-width="1.15"/>
<circle cx="302.2" cy="712.2" r="3.8" fill="#3062b2" stroke="#141414" stroke-width="1.15"/>
<circle cx="376.3" cy="707.6" r="3.8" fill="#3062b2" stroke="#141414" stroke-width="1.15"/>
<circle cx="382.2" cy="708.3" r="3.8" fill="#cdf1fb" stroke="#141414" stroke-width="1.15"/>
<circle cx="375.0" cy="713.6" r="3.8" fill="#cdf1fb" stroke="#141414" stroke-width="1.15"/>
<circle cx="388.8" cy="708.9" r="3.8" fill="#f0cb78" stroke="#141414" stroke-width="1.15"/>
<circle cx="390.8" cy="713.6" r="3.8" fill="#f0cb78" stroke="#141414" stroke-width="1.15"/>
<circle cx="330.7" cy="717.5" r="3.8" fill="#cdf1fb" stroke="#141414" stroke-width="1.15"/>
<circle cx="433.1" cy="603.1" r="3.8" fill="#3062b2" stroke="#141414" stroke-width="1.15"/>
<circle cx="425.8" cy="609.1" r="3.8" fill="#cdf1fb" stroke="#141414" stroke-width="1.15"/>
<circle cx="417.9" cy="611.1" r="3.8" fill="#cdf1fb" stroke="#141414" stroke-width="1.15"/>
<circle cx="413.2" cy="613.1" r="3.8" fill="#85ade8" stroke="#141414" stroke-width="1.15"/>
<circle cx="422.5" cy="615.0" r="3.8" fill="#85ade8" stroke="#141414" stroke-width="1.15"/>
<circle cx="429.8" cy="620.3" r="3.8" fill="#ebebef" stroke="#141414" stroke-width="1.15"/>
<circle cx="439.7" cy="611.7" r="3.8" fill="#3062b2" stroke="#141414" stroke-width="1.15"/>
<circle cx="446.9" cy="612.4" r="3.8" fill="#3062b2" stroke="#141414" stroke-width="1.15"/>
<circle cx="443.0" cy="616.4" r="3.8" fill="#3062b2" stroke="#141414" stroke-width="1.15"/>
<circle cx="446.9" cy="623.6" r="3.8" fill="#cdf1fb" stroke="#141414" stroke-width="1.15"/>
<circle cx="463.5" cy="619.7" r="3.8" fill="#3062b2" stroke="#141414" stroke-width="1.15"/>
<circle cx="466.1" cy="619.7" r="3.8" fill="#f7ea90" stroke="#141414" stroke-width="1.15"/>
<circle cx="467.4" cy="619.0" r="3.8" fill="#f0cb78" stroke="#141414" stroke-width="1.15"/>
<circle cx="480.0" cy="621.7" r="3.8" fill="#f7ea90" stroke="#141414" stroke-width="1.15"/>
<circle cx="490.6" cy="616.4" r="3.8" fill="#f7ea90" stroke="#141414" stroke-width="1.15"/>
<circle cx="503.1" cy="620.3" r="3.8" fill="#cdf1fb" stroke="#141414" stroke-width="1.15"/>
<circle cx="489.9" cy="624.3" r="3.8" fill="#ebebef" stroke="#141414" stroke-width="1.15"/>
<circle cx="496.5" cy="625.6" r="3.8" fill="#cdf1fb" stroke="#141414" stroke-width="1.15"/>
<circle cx="499.8" cy="625.0" r="3.8" fill="#3062b2" stroke="#141414" stroke-width="1.15"/>
<circle cx="456.9" cy="630.2" r="3.8" fill="#85ade8" stroke="#141414" stroke-width="1.15"/>
<circle cx="466.1" cy="633.6" r="3.8" fill="#f0cb78" stroke="#141414" stroke-width="1.15"/>
<circle cx="465.5" cy="636.9" r="3.8" fill="#f0cb78" stroke="#141414" stroke-width="1.15"/>
<circle cx="447.6" cy="635.5" r="3.8" fill="#ebebef" stroke="#141414" stroke-width="1.15"/>
<circle cx="449.6" cy="640.2" r="3.8" fill="#85ade8" stroke="#141414" stroke-width="1.15"/>
<circle cx="458.2" cy="639.5" r="3.8" fill="#85ade8" stroke="#141414" stroke-width="1.15"/>
<circle cx="478.0" cy="632.2" r="3.8" fill="#ebebef" stroke="#141414" stroke-width="1.15"/>
<circle cx="490.6" cy="632.2" r="3.8" fill="#ebebef" stroke="#141414" stroke-width="1.15"/>
<circle cx="480.7" cy="638.2" r="3.8" fill="#cdf1fb" stroke="#141414" stroke-width="1.15"/>
<circle cx="495.2" cy="636.2" r="3.8" fill="#cdf1fb" stroke="#141414" stroke-width="1.15"/>
<circle cx="494.5" cy="640.8" r="3.8" fill="#3062b2" stroke="#141414" stroke-width="1.15"/>
<circle cx="503.1" cy="639.5" r="3.8" fill="#ebebef" stroke="#141414" stroke-width="1.15"/>
<circle cx="511.1" cy="639.5" r="3.8" fill="#f0cb78" stroke="#141414" stroke-width="1.15"/>
<circle cx="516.4" cy="638.2" r="3.8" fill="#f7ea90" stroke="#141414" stroke-width="1.15"/>
<circle cx="510.4" cy="643.5" r="3.8" fill="#f7ea90" stroke="#141414" stroke-width="1.15"/>
<circle cx="487.3" cy="643.5" r="3.8" fill="#f0cb78" stroke="#141414" stroke-width="1.15"/>
<circle cx="492.6" cy="646.8" r="3.8" fill="#3062b2" stroke="#141414" stroke-width="1.15"/>
<circle cx="500.5" cy="644.8" r="3.8" fill="#f0cb78" stroke="#141414" stroke-width="1.15"/>
<circle cx="486.0" cy="647.4" r="3.8" fill="#85ade8" stroke="#141414" stroke-width="1.15"/>
<circle cx="472.1" cy="648.8" r="3.8" fill="#ebebef" stroke="#141414" stroke-width="1.15"/>
<circle cx="478.0" cy="648.8" r="3.8" fill="#cdf1fb" stroke="#141414" stroke-width="1.15"/>
<circle cx="474.7" cy="656.0" r="3.8" fill="#f0cb78" stroke="#141414" stroke-width="1.15"/>
<circle cx="480.0" cy="661.3" r="3.8" fill="#cdf1fb" stroke="#141414" stroke-width="1.15"/>
<circle cx="484.0" cy="666.0" r="3.8" fill="#3062b2" stroke="#141414" stroke-width="1.15"/>
<circle cx="538.2" cy="631.6" r="3.8" fill="#f7ea90" stroke="#141414" stroke-width="1.15"/>
<circle cx="529.6" cy="643.5" r="3.8" fill="#f0cb78" stroke="#141414" stroke-width="1.15"/>
<circle cx="531.6" cy="642.8" r="3.8" fill="#f7ea90" stroke="#141414" stroke-width="1.15"/>
<circle cx="418.5" cy="634.2" r="3.8" fill="#f0cb78" stroke="#141414" stroke-width="1.15"/>
<circle cx="413.2" cy="636.9" r="3.8" fill="#cdf1fb" stroke="#141414" stroke-width="1.15"/>
<circle cx="421.8" cy="638.2" r="3.8" fill="#3062b2" stroke="#141414" stroke-width="1.15"/>
<circle cx="412.6" cy="646.1" r="3.8" fill="#85ade8" stroke="#141414" stroke-width="1.15"/>
<circle cx="417.2" cy="651.4" r="3.8" fill="#3062b2" stroke="#141414" stroke-width="1.15"/>
<circle cx="433.1" cy="646.1" r="3.8" fill="#ebebef" stroke="#141414" stroke-width="1.15"/>
<circle cx="433.7" cy="655.4" r="3.8" fill="#ebebef" stroke="#141414" stroke-width="1.15"/>
<circle cx="443.6" cy="647.4" r="3.8" fill="#85ade8" stroke="#141414" stroke-width="1.15"/>
<circle cx="424.5" cy="660.7" r="3.8" fill="#cdf1fb" stroke="#141414" stroke-width="1.15"/>
<circle cx="433.1" cy="664.6" r="3.8" fill="#cdf1fb" stroke="#141414" stroke-width="1.15"/>
<circle cx="448.9" cy="663.3" r="3.8" fill="#f7ea90" stroke="#141414" stroke-width="1.15"/>
<circle cx="454.9" cy="667.3" r="3.8" fill="#ebebef" stroke="#141414" stroke-width="1.15"/>
<circle cx="458.2" cy="673.2" r="3.8" fill="#3062b2" stroke="#141414" stroke-width="1.15"/>
<circle cx="444.3" cy="673.9" r="3.8" fill="#ebebef" stroke="#141414" stroke-width="1.15"/>
<circle cx="452.9" cy="677.9" r="3.8" fill="#85ade8" stroke="#141414" stroke-width="1.15"/>
<circle cx="466.1" cy="679.8" r="3.8" fill="#f0cb78" stroke="#141414" stroke-width="1.15"/>
<circle cx="468.8" cy="671.2" r="3.8" fill="#3062b2" stroke="#141414" stroke-width="1.15"/>
<circle cx="469.4" cy="675.2" r="3.8" fill="#cdf1fb" stroke="#141414" stroke-width="1.15"/>
<circle cx="474.0" cy="668.6" r="3.8" fill="#85ade8" stroke="#141414" stroke-width="1.15"/>
<circle cx="476.7" cy="677.9" r="3.8" fill="#85ade8" stroke="#141414" stroke-width="1.15"/>
<circle cx="479.3" cy="682.5" r="3.8" fill="#85ade8" stroke="#141414" stroke-width="1.15"/>
<circle cx="492.6" cy="669.9" r="3.8" fill="#f0cb78" stroke="#141414" stroke-width="1.15"/>
<circle cx="495.2" cy="668.6" r="3.8" fill="#f0cb78" stroke="#141414" stroke-width="1.15"/>
<circle cx="494.5" cy="664.6" r="3.8" fill="#f0cb78" stroke="#141414" stroke-width="1.15"/>
<circle cx="411.2" cy="670.6" r="3.8" fill="#f7ea90" stroke="#141414" stroke-width="1.15"/>
<circle cx="414.5" cy="677.2" r="3.8" fill="#f7ea90" stroke="#141414" stroke-width="1.15"/>
<circle cx="410.6" cy="688.4" r="3.8" fill="#f0cb78" stroke="#141414" stroke-width="1.15"/>
<circle cx="424.5" cy="685.8" r="3.8" fill="#3062b2" stroke="#141414" stroke-width="1.15"/>
<circle cx="430.4" cy="696.4" r="3.8" fill="#cdf1fb" stroke="#141414" stroke-width="1.15"/>
<circle cx="446.3" cy="691.7" r="3.8" fill="#3062b2" stroke="#141414" stroke-width="1.15"/>
<circle cx="461.5" cy="699.7" r="3.8" fill="#ebebef" stroke="#141414" stroke-width="1.15"/>
<circle cx="468.8" cy="701.7" r="3.8" fill="#ebebef" stroke="#141414" stroke-width="1.15"/>
<circle cx="462.1" cy="706.3" r="3.8" fill="#cdf1fb" stroke="#141414" stroke-width="1.15"/>
<circle cx="465.5" cy="709.6" r="3.8" fill="#f0cb78" stroke="#141414" stroke-width="1.15"/>
<circle cx="448.3" cy="710.2" r="3.8" fill="#3062b2" stroke="#141414" stroke-width="1.15"/>
<circle cx="452.9" cy="713.6" r="3.8" fill="#f0cb78" stroke="#141414" stroke-width="1.15"/>
<circle cx="425.8" cy="715.5" r="3.8" fill="#cdf1fb" stroke="#141414" stroke-width="1.15"/>
<circle cx="439.7" cy="716.2" r="3.8" fill="#3062b2" stroke="#141414" stroke-width="1.15"/>
<circle cx="317.8" cy="727.8" r="3.8" fill="#3062b2" stroke="#141414" stroke-width="1.15"/>
<circle cx="327.7" cy="728.4" r="3.8" fill="#3062b2" stroke="#141414" stroke-width="1.15"/>
<circle cx="329.7" cy="733.1" r="3.8" fill="#3062b2" stroke="#141414" stroke-width="1.15"/>
<circle cx="333.6" cy="732.4" r="3.8" fill="#f0cb78" stroke="#141414" stroke-width="1.15"/>
<circle cx="338.3" cy="726.4" r="3.8" fill="#ebebef" stroke="#141414" stroke-width="1.15"/>
<circle cx="343.6" cy="725.1" r="3.8" fill="#ebebef" stroke="#141414" stroke-width="1.15"/>
<circle cx="350.8" cy="721.2" r="3.8" fill="#85ade8" stroke="#141414" stroke-width="1.15"/>
<circle cx="356.1" cy="727.8" r="3.8" fill="#85ade8" stroke="#141414" stroke-width="1.15"/>
<circle cx="359.4" cy="721.2" r="3.8" fill="#f7ea90" stroke="#141414" stroke-width="1.15"/>
<circle cx="348.2" cy="733.1" r="3.8" fill="#f7ea90" stroke="#141414" stroke-width="1.15"/>
<circle cx="348.8" cy="735.0" r="3.8" fill="#f7ea90" stroke="#141414" stroke-width="1.15"/>
<circle cx="314.5" cy="741.0" r="3.8" fill="#cdf1fb" stroke="#141414" stroke-width="1.15"/>
<circle cx="326.4" cy="744.3" r="3.8" fill="#ebebef" stroke="#141414" stroke-width="1.15"/>
<circle cx="320.4" cy="745.0" r="3.8" fill="#3062b2" stroke="#141414" stroke-width="1.15"/>
<circle cx="315.1" cy="748.3" r="3.8" fill="#3062b2" stroke="#141414" stroke-width="1.15"/>
<circle cx="321.7" cy="750.9" r="3.8" fill="#3062b2" stroke="#141414" stroke-width="1.15"/>
<circle cx="332.3" cy="739.0" r="3.8" fill="#f0cb78" stroke="#141414" stroke-width="1.15"/>
<circle cx="334.3" cy="745.6" r="3.8" fill="#f0cb78" stroke="#141414" stroke-width="1.15"/>
<circle cx="339.6" cy="752.2" r="3.8" fill="#85ade8" stroke="#141414" stroke-width="1.15"/>
<circle cx="354.8" cy="753.6" r="3.8" fill="#f0cb78" stroke="#141414" stroke-width="1.15"/>
<circle cx="362.1" cy="758.2" r="3.8" fill="#f0cb78" stroke="#141414" stroke-width="1.15"/>
<circle cx="369.3" cy="762.1" r="3.8" fill="#ebebef" stroke="#141414" stroke-width="1.15"/>
<circle cx="373.3" cy="760.2" r="3.8" fill="#f0cb78" stroke="#141414" stroke-width="1.15"/>
<circle cx="377.3" cy="758.2" r="3.8" fill="#f0cb78" stroke="#141414" stroke-width="1.15"/>
<circle cx="330.3" cy="758.2" r="3.8" fill="#f0cb78" stroke="#141414" stroke-width="1.15"/>
<circle cx="338.3" cy="761.5" r="3.8" fill="#f7ea90" stroke="#141414" stroke-width="1.15"/>
<circle cx="327.7" cy="763.5" r="3.8" fill="#f7ea90" stroke="#141414" stroke-width="1.15"/>
<circle cx="319.1" cy="769.4" r="3.8" fill="#3062b2" stroke="#141414" stroke-width="1.15"/>
<circle cx="325.7" cy="770.7" r="3.8" fill="#cdf1fb" stroke="#141414" stroke-width="1.15"/>
<circle cx="335.0" cy="768.8" r="3.8" fill="#ebebef" stroke="#141414" stroke-width="1.15"/>
<circle cx="340.9" cy="768.8" r="3.8" fill="#cdf1fb" stroke="#141414" stroke-width="1.15"/>
<circle cx="349.5" cy="768.1" r="3.8" fill="#f0cb78" stroke="#141414" stroke-width="1.15"/>
<circle cx="358.8" cy="766.1" r="3.8" fill="#f0cb78" stroke="#141414" stroke-width="1.15"/>
<circle cx="303.2" cy="773.4" r="3.8" fill="#cdf1fb" stroke="#141414" stroke-width="1.15"/>
<circle cx="308.5" cy="780.0" r="3.8" fill="#cdf1fb" stroke="#141414" stroke-width="1.15"/>
<circle cx="314.5" cy="776.7" r="3.8" fill="#85ade8" stroke="#141414" stroke-width="1.15"/>
<circle cx="328.3" cy="773.4" r="3.8" fill="#85ade8" stroke="#141414" stroke-width="1.15"/>
<circle cx="335.6" cy="772.1" r="3.8" fill="#ebebef" stroke="#141414" stroke-width="1.15"/>
<circle cx="342.9" cy="787.9" r="3.8" fill="#f0cb78" stroke="#141414" stroke-width="1.15"/>
<circle cx="354.1" cy="786.0" r="3.8" fill="#f0cb78" stroke="#141414" stroke-width="1.15"/>
<circle cx="350.8" cy="794.5" r="3.8" fill="#f0cb78" stroke="#141414" stroke-width="1.15"/>
<circle cx="342.2" cy="797.9" r="3.8" fill="#f7ea90" stroke="#141414" stroke-width="1.15"/>
<circle cx="347.5" cy="799.2" r="3.8" fill="#cdf1fb" stroke="#141414" stroke-width="1.15"/>
<circle cx="342.2" cy="807.8" r="3.8" fill="#f0cb78" stroke="#141414" stroke-width="1.15"/>
<circle cx="349.5" cy="809.1" r="3.8" fill="#cdf1fb" stroke="#141414" stroke-width="1.15"/>
<circle cx="345.5" cy="813.7" r="3.8" fill="#cdf1fb" stroke="#141414" stroke-width="1.15"/>
<circle cx="360.7" cy="803.1" r="3.8" fill="#85ade8" stroke="#141414" stroke-width="1.15"/>
<circle cx="364.7" cy="791.2" r="3.8" fill="#ebebef" stroke="#141414" stroke-width="1.15"/>
<circle cx="372.6" cy="795.9" r="3.8" fill="#f7ea90" stroke="#141414" stroke-width="1.15"/>
<circle cx="379.3" cy="793.2" r="3.8" fill="#f0cb78" stroke="#141414" stroke-width="1.15"/>
<circle cx="385.2" cy="789.9" r="3.8" fill="#f0cb78" stroke="#141414" stroke-width="1.15"/>
<circle cx="394.5" cy="793.2" r="3.8" fill="#cdf1fb" stroke="#141414" stroke-width="1.15"/>
<circle cx="405.0" cy="793.2" r="3.8" fill="#f0cb78" stroke="#141414" stroke-width="1.15"/>
<circle cx="374.0" cy="782.0" r="3.8" fill="#f0cb78" stroke="#141414" stroke-width="1.15"/>
<circle cx="377.3" cy="771.4" r="3.8" fill="#f0cb78" stroke="#141414" stroke-width="1.15"/>
<circle cx="382.6" cy="771.4" r="3.8" fill="#f7ea90" stroke="#141414" stroke-width="1.15"/>
<circle cx="388.5" cy="772.1" r="3.8" fill="#f7ea90" stroke="#141414" stroke-width="1.15"/>
<circle cx="389.8" cy="777.4" r="3.8" fill="#f0cb78" stroke="#141414" stroke-width="1.15"/>
<circle cx="390.5" cy="782.6" r="3.8" fill="#ebebef" stroke="#141414" stroke-width="1.15"/>
<circle cx="395.8" cy="784.0" r="3.8" fill="#3062b2" stroke="#141414" stroke-width="1.15"/>
<circle cx="399.8" cy="780.7" r="3.8" fill="#f0cb78" stroke="#141414" stroke-width="1.15"/>
<circle cx="387.2" cy="756.2" r="3.8" fill="#f7ea90" stroke="#141414" stroke-width="1.15"/>
<circle cx="393.8" cy="758.2" r="3.8" fill="#f0cb78" stroke="#141414" stroke-width="1.15"/>
<circle cx="385.2" cy="754.2" r="3.8" fill="#f0cb78" stroke="#141414" stroke-width="1.15"/>
<circle cx="380.6" cy="746.3" r="3.8" fill="#f7ea90" stroke="#141414" stroke-width="1.15"/>
<circle cx="391.2" cy="745.6" r="3.8" fill="#ebebef" stroke="#141414" stroke-width="1.15"/>
<circle cx="399.1" cy="741.7" r="3.8" fill="#f0cb78" stroke="#141414" stroke-width="1.15"/>
<circle cx="401.1" cy="736.4" r="3.8" fill="#3062b2" stroke="#141414" stroke-width="1.15"/>
<circle cx="405.0" cy="730.4" r="3.8" fill="#3062b2" stroke="#141414" stroke-width="1.15"/>
<circle cx="387.9" cy="739.0" r="3.8" fill="#f0cb78" stroke="#141414" stroke-width="1.15"/>
<circle cx="382.6" cy="729.8" r="3.8" fill="#f0cb78" stroke="#141414" stroke-width="1.15"/>
<circle cx="376.0" cy="721.2" r="3.8" fill="#f0cb78" stroke="#141414" stroke-width="1.15"/>
<circle cx="406.4" cy="766.1" r="3.8" fill="#ebebef" stroke="#141414" stroke-width="1.15"/>
<circle cx="406.4" cy="774.0" r="3.8" fill="#f7ea90" stroke="#141414" stroke-width="1.15"/>
<circle cx="413.6" cy="765.5" r="3.8" fill="#f0cb78" stroke="#141414" stroke-width="1.15"/>
<circle cx="406.4" cy="760.2" r="3.8" fill="#3062b2" stroke="#141414" stroke-width="1.15"/>
<circle cx="409.7" cy="755.5" r="3.8" fill="#f7ea90" stroke="#141414" stroke-width="1.15"/>
<circle cx="416.3" cy="755.5" r="3.8" fill="#3062b2" stroke="#141414" stroke-width="1.15"/>
<circle cx="422.2" cy="755.5" r="3.8" fill="#cdf1fb" stroke="#141414" stroke-width="1.15"/>
<circle cx="407.7" cy="750.2" r="3.8" fill="#f0cb78" stroke="#141414" stroke-width="1.15"/>
<circle cx="414.3" cy="748.9" r="3.8" fill="#cdf1fb" stroke="#141414" stroke-width="1.15"/>
<circle cx="423.6" cy="749.6" r="3.8" fill="#f7ea90" stroke="#141414" stroke-width="1.15"/>
<circle cx="431.5" cy="746.3" r="3.8" fill="#ebebef" stroke="#141414" stroke-width="1.15"/>
<circle cx="434.8" cy="756.2" r="3.8" fill="#85ade8" stroke="#141414" stroke-width="1.15"/>
<circle cx="440.1" cy="759.5" r="3.8" fill="#85ade8" stroke="#141414" stroke-width="1.15"/>
<circle cx="442.1" cy="764.8" r="3.8" fill="#f0cb78" stroke="#141414" stroke-width="1.15"/>
<circle cx="448.0" cy="758.2" r="3.8" fill="#f0cb78" stroke="#141414" stroke-width="1.15"/>
<circle cx="428.8" cy="767.4" r="3.8" fill="#f0cb78" stroke="#141414" stroke-width="1.15"/>
<circle cx="432.8" cy="768.8" r="3.8" fill="#ebebef" stroke="#141414" stroke-width="1.15"/>
<circle cx="430.8" cy="780.0" r="3.8" fill="#f0cb78" stroke="#141414" stroke-width="1.15"/>
<circle cx="453.1" cy="724.2" r="3.8" fill="#cdf1fb" stroke="#141414" stroke-width="1.15"/>
<circle cx="458.7" cy="728.2" r="3.8" fill="#f0cb78" stroke="#141414" stroke-width="1.15"/>
<circle cx="462.7" cy="733.3" r="3.8" fill="#f7ea90" stroke="#141414" stroke-width="1.15"/>
<circle cx="465.5" cy="737.2" r="3.8" fill="#cdf1fb" stroke="#141414" stroke-width="1.15"/>
<circle cx="469.5" cy="741.8" r="3.8" fill="#cdf1fb" stroke="#141414" stroke-width="1.15"/>
<circle cx="467.8" cy="746.3" r="3.8" fill="#ebebef" stroke="#141414" stroke-width="1.15"/>
<circle cx="455.9" cy="753.7" r="3.8" fill="#f7ea90" stroke="#141414" stroke-width="1.15"/>
<circle cx="454.8" cy="760.5" r="3.8" fill="#f7ea90" stroke="#141414" stroke-width="1.15"/>
</svg>
<div class="r" style="left:46px;top:417px;width:729px;height:565px;overflow:hidden"><div class="r" style="left:-46px;top:-417px;width:1838px;height:1059px">
<div class="t" style="left:512.0px;top:414.0px;font-size:12.7px;line-height:12.7px;color:#d8d8d8;font-weight:400;letter-spacing:0.3px;text-shadow:0 0 1px #2a2a2a,0 0 1px #2a2a2a,0 0 2px #2a2a2a;">Paris</div>
<div class="t" style="left:655.0px;top:416.6px;font-size:12.9px;line-height:12.9px;color:#d8d8d8;font-weight:400;letter-spacing:0.3px;text-shadow:0 0 1px #2a2a2a,0 0 1px #2a2a2a,0 0 2px #2a2a2a;">Stuttgart</div>
<div class="t" style="left:716.6px;top:443.2px;font-size:12.5px;line-height:12.5px;color:#d8d8d8;font-weight:400;letter-spacing:0.3px;text-shadow:0 0 1px #2a2a2a,0 0 1px #2a2a2a,0 0 2px #2a2a2a;">M</div>
<div class="t" style="left:652.0px;top:464.3px;font-size:12.2px;line-height:12.2px;color:#d8d8d8;font-weight:400;letter-spacing:0.3px;text-shadow:0 0 1px #2a2a2a,0 0 1px #2a2a2a,0 0 2px #2a2a2a;">Zurich</div>
<div class="t" style="left:571.4px;top:518.2px;font-size:12.6px;line-height:12.6px;color:#d8d8d8;font-weight:400;letter-spacing:0.3px;text-shadow:0 0 1px #2a2a2a,0 0 1px #2a2a2a,0 0 2px #2a2a2a;">Lyon</div>
<div class="t" style="left:667.3px;top:526.6px;font-size:13.0px;line-height:13.0px;color:#d8d8d8;font-weight:400;letter-spacing:0.3px;text-shadow:0 0 1px #2a2a2a,0 0 1px #2a2a2a,0 0 2px #2a2a2a;">Milan</div>
<div class="t" style="left:635.5px;top:540.5px;font-size:12.8px;line-height:12.8px;color:#d8d8d8;font-weight:400;letter-spacing:0.3px;text-shadow:0 0 1px #2a2a2a,0 0 1px #2a2a2a,0 0 2px #2a2a2a;">Turin</div>
<div class="t" style="left:481.6px;top:587.2px;font-size:12.6px;line-height:12.6px;color:#d8d8d8;font-weight:400;letter-spacing:0.3px;text-shadow:0 0 1px #2a2a2a,0 0 1px #2a2a2a,0 0 2px #2a2a2a;">Toulouse</div>
<div class="t" style="left:616.9px;top:580.2px;font-size:13.8px;line-height:13.8px;color:#d8d8d8;font-weight:400;letter-spacing:0.3px;text-shadow:0 0 1px #2a2a2a,0 0 1px #2a2a2a,0 0 2px #2a2a2a;">Monaco</div>
<div class="t" style="left:570.3px;top:600.7px;font-size:12.87px;line-height:12.87px;color:#d8d8d8;font-weight:400;letter-spacing:0.3px;text-shadow:0 0 1px #2a2a2a,0 0 1px #2a2a2a,0 0 2px #2a2a2a;">Marseille</div>
<div class="t" style="left:739.6px;top:639.1px;font-size:14.0px;line-height:14.0px;color:#d8d8d8;font-weight:400;letter-spacing:0.3px;text-shadow:0 0 1px #2a2a2a,0 0 1px #2a2a2a,0 0 2px #2a2a2a;">Rome</div>
<div class="t" style="left:263.0px;top:662.5px;font-size:12.4px;line-height:12.4px;color:#d8d8d8;font-weight:400;letter-spacing:0.3px;text-shadow:0 0 1px #2a2a2a,0 0 1px #2a2a2a,0 0 2px #2a2a2a;">Porto</div>
<div class="t" style="left:497.5px;top:656.1px;font-size:12.2px;line-height:12.2px;color:#d8d8d8;font-weight:400;letter-spacing:0.3px;text-shadow:0 0 1px #2a2a2a,0 0 1px #2a2a2a,0 0 2px #2a2a2a;">Barcelona</div>
<div class="t" style="left:367.0px;top:685.2px;font-size:13.4px;line-height:13.4px;color:#d8d8d8;font-weight:400;letter-spacing:0.3px;text-shadow:0 0 1px #2a2a2a,0 0 1px #2a2a2a,0 0 2px #2a2a2a;">Madrid</div>
<div class="t" style="left:244.3px;top:733.5px;font-size:13.95px;line-height:13.95px;color:#d8d8d8;font-weight:400;letter-spacing:0.3px;text-shadow:0 0 1px #2a2a2a,0 0 1px #2a2a2a,0 0 2px #2a2a2a;">Lisbon</div>
<div class="t" style="left:755.0px;top:751.7px;font-size:12.5px;line-height:12.5px;color:#d8d8d8;font-weight:400;letter-spacing:0.3px;text-shadow:0 0 1px #2a2a2a,0 0 1px #2a2a2a,0 0 2px #2a2a2a;">Pale</div>
<div class="t" style="left:320.5px;top:775.1px;font-size:12.0px;line-height:12.0px;color:#d8d8d8;font-weight:400;letter-spacing:0.3px;text-shadow:0 0 1px #2a2a2a,0 0 1px #2a2a2a,0 0 2px #2a2a2a;">Sevilla</div>
<div class="t" style="left:522.1px;top:790.0px;font-size:13.8px;line-height:13.8px;color:#d8d8d8;font-weight:400;letter-spacing:0.3px;text-shadow:0 0 1px #2a2a2a,0 0 1px #2a2a2a,0 0 2px #2a2a2a;">Algiers</div>
<div class="t" style="left:690.3px;top:788.8px;font-size:13.9px;line-height:13.9px;color:#d8d8d8;font-weight:400;letter-spacing:0.3px;text-shadow:0 0 1px #2a2a2a,0 0 1px #2a2a2a,0 0 2px #2a2a2a;">Tunis</div>
<div class="t" style="left:337.5px;top:815.1px;font-size:12.0px;line-height:12.0px;color:#d8d8d8;font-weight:400;letter-spacing:0.3px;text-shadow:0 0 1px #2a2a2a,0 0 1px #2a2a2a,0 0 2px #2a2a2a;">Ceuta</div>
<div class="t" style="left:446.5px;top:821.5px;font-size:12.2px;line-height:12.2px;color:#d8d8d8;font-weight:400;letter-spacing:0.3px;text-shadow:0 0 1px #2a2a2a,0 0 1px #2a2a2a,0 0 2px #2a2a2a;">Oran</div>
<div class="t" style="left:390.6px;top:832.6px;font-size:12.0px;line-height:12.0px;color:#d8d8d8;font-weight:400;letter-spacing:0.3px;text-shadow:0 0 1px #2a2a2a,0 0 1px #2a2a2a,0 0 2px #2a2a2a;">Melilla</div>
<div class="t" style="left:299.7px;top:866.9px;font-size:13.6px;line-height:13.6px;color:#d8d8d8;font-weight:400;letter-spacing:0.3px;text-shadow:0 0 1px #2a2a2a,0 0 1px #2a2a2a,0 0 2px #2a2a2a;">Rabat</div>
<div class="t" style="left:353.4px;top:867.1px;font-size:12.0px;line-height:12.0px;color:#d8d8d8;font-weight:400;letter-spacing:0.3px;text-shadow:0 0 1px #2a2a2a,0 0 1px #2a2a2a,0 0 2px #2a2a2a;">Fez</div>
<div class="t" style="left:267.4px;top:883.8px;font-size:11.74px;line-height:11.74px;color:#d8d8d8;font-weight:400;letter-spacing:0.3px;text-shadow:0 0 1px #2a2a2a,0 0 1px #2a2a2a,0 0 2px #2a2a2a;">Casablanca</div>
<div class="t" style="left:755.0px;top:897.9px;font-size:12.5px;line-height:12.5px;color:#d8d8d8;font-weight:400;letter-spacing:0.3px;text-shadow:0 0 1px #2a2a2a,0 0 1px #2a2a2a,0 0 2px #2a2a2a;">Trip</div>
<div class="t" style="left:390.6px;top:597.5px;font-size:11.5px;line-height:11.5px;color:#d8d8d8;font-weight:400;letter-spacing:0.3px;text-shadow:0 0 1px #2a2a2a,0 0 1px #2a2a2a,0 0 2px #2a2a2a;">Bilbao</div>
<div class="t" style="left:486.5px;top:486.2px;font-size:12.2px;line-height:12.2px;color:#9a9a9a;font-weight:400;letter-spacing:6.9px;">FRANCE</div>
<div class="t" style="left:620.7px;top:484.8px;font-size:10.6px;line-height:10.6px;color:#9a9a9a;font-weight:400;letter-spacing:0.4px;">SWITZERLAND</div>
<div class="t" style="left:731.4px;top:610.8px;font-size:10.6px;line-height:10.6px;color:#9a9a9a;font-weight:400;letter-spacing:2.3px;">ITALY</div>
<div class="t" style="left:260.2px;top:696.5px;font-size:11.0px;line-height:11.0px;color:#9a9a9a;font-weight:400;letter-spacing:1.4px;">PORTUGAL</div>
<div class="t" style="left:653.6px;top:865.6px;font-size:10.6px;line-height:10.6px;color:#9a9a9a;font-weight:400;letter-spacing:0.9px;">TUNISIA</div>
<div class="t" style="left:344.0px;top:532.5px;font-size:10.6px;line-height:10.6px;color:#7c7c80;font-weight:400;font-style:italic;letter-spacing:0.9px;">Bay of Biscay</div>
<div class="t" style="left:548.4px;top:604.1px;font-size:11.5px;line-height:11.5px;color:#7c7c80;font-weight:400;font-style:italic;letter-spacing:0.8px;">Gulf of</div>
<div class="t" style="left:548.4px;top:618.3px;font-size:11.5px;line-height:11.5px;color:#7c7c80;font-weight:400;font-style:italic;letter-spacing:0.8px;">Lion</div>
<div class="t" style="left:654.7px;top:586.6px;font-size:11.5px;line-height:11.5px;color:#7c7c80;font-weight:400;font-style:italic;letter-spacing:0.8px;">Ligurian</div>
<div class="t" style="left:654.7px;top:601.9px;font-size:11.5px;line-height:11.5px;color:#7c7c80;font-weight:400;font-style:italic;letter-spacing:0.8px;">Sea</div>
<div class="t" style="left:734.7px;top:702.7px;font-size:11.5px;line-height:11.5px;color:#7c7c80;font-weight:400;font-style:italic;letter-spacing:0.8px;">Tyrrhen</div>
<div class="t" style="left:754.0px;top:718.1px;font-size:11.5px;line-height:11.5px;color:#7c7c80;font-weight:400;font-style:italic;letter-spacing:0.8px;">Sea</div>
</div></div>
<div class="r" style="left:63px;top:917px;width:92px;height:16px;background:#6e6e6e;box-shadow:1px 1px 0 0 #3a3a3a;"></div>
<div class="t" style="left:68.0px;top:919.1px;font-size:12.3px;line-height:12.3px;color:#2e2e2e;font-weight:400;-webkit-text-stroke:0.3px currentColor;">400 km</div>
<div class="r" style="left:63px;top:935px;width:74px;height:16px;background:#6e6e6e;box-shadow:1px 1px 0 0 #3a3a3a;"></div>
<div class="t" style="left:68.0px;top:937.1px;font-size:12.3px;line-height:12.3px;color:#2e2e2e;font-weight:400;-webkit-text-stroke:0.3px currentColor;">200 mi</div>
<div class="r" style="left:46px;top:966px;width:729px;height:16px;background:#dcdcdc;"></div>
<div class="t" style="left:50.5px;top:968.5px;font-size:11.2px;line-height:11.2px;color:#333;font-weight:400;">Esri, HERE, Garmin, USGS | Esri, HERE</div>
<div class="t" style="left:-430.0px;width:1200px;text-align:right;top:968.5px;font-size:11.2px;line-height:11.2px;color:#333;font-weight:400;">Powered by Esri</div>
<div class="r" style="left:728px;top:432px;width:32px;height:32px;background:#fff;border-radius:3px;"></div>
<svg style="left:734px;top:438px" width="20" height="20" viewBox="0 0 20 20"><path d="M10 3 L17 7 L10 11 L3 7 Z" fill="none" stroke="#555" stroke-width="1"/><path d="M3 10 L10 14 L17 10" fill="none" stroke="#555" stroke-width="1"/><path d="M3 13 L10 17 L17 13" fill="none" stroke="#555" stroke-width="1"/></svg>
<div class="r" style="left:728px;top:888px;width:32px;height:64px;background:#fff;"></div>
<div class="r" style="left:728px;top:920px;width:32px;height:1px;background:#dcdcdc;"></div>
<svg style="left:728px;top:888px" width="32" height="64" viewBox="0 0 32 64"><path d="M16 8.5 V23.5 M8.5 16 H23.5" stroke="#555" stroke-width="1.1"/><path d="M8.5 47 H23.5" stroke="#555" stroke-width="1.1"/></svg>
<div class="r" style="left:784px;top:416px;width:200px;height:567px;background:#8d8a88;"></div>
<div class="r" style="left:785px;top:417px;width:198px;height:565px;background:#2a2a2a;"></div>
<div class="r" style="left:976px;top:417px;width:7px;height:565px;background:#cacaca;"></div>
<div class="t" style="left:800.0px;top:430.8px;font-size:13.2px;line-height:13.2px;color:#fff;font-weight:700;">Embalses</div>
<div class="t" style="left:807.5px;top:462.8px;font-size:13.55px;line-height:13.55px;color:#fff;font-weight:400;">Porcentaje Reserva</div>
<div class="t" style="left:807.5px;top:480.7px;font-size:13.55px;line-height:13.55px;color:#fff;font-weight:400;">Hídrica (%)</div>
<svg style="left:784px;top:416px" width="200" height="566" viewBox="784 416 200 566">
<circle cx="818.5" cy="516.2" r="3.8" fill="#2d5ca8" stroke="#222" stroke-width="0.6"/>
<circle cx="818.5" cy="542.8" r="3.8" fill="#85ade8" stroke="#222" stroke-width="0.6"/>
<circle cx="818.5" cy="568.8" r="3.8" fill="#cdf1fb" stroke="#222" stroke-width="0.6"/>
<circle cx="818.5" cy="595.2" r="3.8" fill="#ebebef" stroke="#222" stroke-width="0.6"/>
<circle cx="818.5" cy="620.8" r="3.8" fill="#f7ea90" stroke="#222" stroke-width="0.6"/>
<circle cx="818.5" cy="646.9" r="3.8" fill="#f0cb78" stroke="#222" stroke-width="0.6"/>
<path d="M814 794.2 L837 804.2 L837 816.6 L814 816.6 Z" fill="#1f2e6c" stroke="#fff" stroke-width="1"/>
<path d="M814 825.2 L837 835.2 L837 847.6 L814 847.6 Z" fill="#6f7fa6" stroke="#fff" stroke-width="1"/>
<path d="M814 856.3 L837 866.3 L837 878.7 L814 878.7 Z" fill="#d3d5e1" stroke="#fff" stroke-width="1"/>
<path d="M814 887.4 L837 897.4 L837 909.8 L814 909.8 Z" fill="#efebe6" stroke="#fff" stroke-width="1"/>
<path d="M814 918.4 L837 928.4 L837 940.8 L814 940.8 Z" fill="#f3e3bd" stroke="#fff" stroke-width="1"/>
<path d="M814 949.5 L837 959.5 L837 971.9 L814 971.9 Z" fill="#dfc49d" stroke="#fff" stroke-width="1"/>
<line x1="785" y1="685" x2="976" y2="685" stroke="#444" stroke-width="1"/>
</svg>
<div class="t" style="left:831.0px;top:510.0px;font-size:12.0px;line-height:12.0px;color:#fff;font-weight:400;">85 - 100</div>
<div class="t" style="left:831.0px;top:536.6px;font-size:12.0px;line-height:12.0px;color:#fff;font-weight:400;">70 - 85</div>
<div class="t" style="left:831.0px;top:562.6px;font-size:12.0px;line-height:12.0px;color:#fff;font-weight:400;">55 - 70</div>
<div class="t" style="left:831.0px;top:589.0px;font-size:12.0px;line-height:12.0px;color:#fff;font-weight:400;">40 - 55</div>
<div class="t" style="left:831.0px;top:614.6px;font-size:12.0px;line-height:12.0px;color:#fff;font-weight:400;">25 - 40</div>
<div class="t" style="left:831.0px;top:640.7px;font-size:12.0px;line-height:12.0px;color:#fff;font-weight:400;">&lt;25</div>
<div class="t" style="left:800.0px;top:700.4px;font-size:13.39px;line-height:13.39px;color:#fff;font-weight:700;">Demarcaciones</div>
<div class="t" style="left:800.0px;top:717.1px;font-size:13.39px;line-height:13.39px;color:#fff;font-weight:700;">hidrográficas</div>
<div class="t" style="left:807.0px;top:749.7px;font-size:14.06px;line-height:14.06px;color:#fff;font-weight:400;">Porcentaje reserva</div>
<div class="t" style="left:807.0px;top:767.1px;font-size:14.06px;line-height:14.06px;color:#fff;font-weight:400;">hídrica (%)</div>
<div class="t" style="left:844.0px;top:799.8px;font-size:12.0px;line-height:12.0px;color:#fff;font-weight:400;">85 - 100</div>
<div class="t" style="left:844.0px;top:830.9px;font-size:12.0px;line-height:12.0px;color:#fff;font-weight:400;">70 - 85</div>
<div class="t" style="left:844.0px;top:861.9px;font-size:12.0px;line-height:12.0px;color:#fff;font-weight:400;">55 - 70</div>
<div class="t" style="left:844.0px;top:893.0px;font-size:12.0px;line-height:12.0px;color:#fff;font-weight:400;">40 - 55</div>
<div class="t" style="left:844.0px;top:924.0px;font-size:12.0px;line-height:12.0px;color:#fff;font-weight:400;">25 - 40</div>
<div class="t" style="left:844.0px;top:955.1px;font-size:12.0px;line-height:12.0px;color:#fff;font-weight:400;">&lt;25</div>
<div class="r" style="left:992px;top:171px;width:801px;height:369px;background:#8d8a88;"></div>
<div class="r" style="left:993px;top:172px;width:799px;height:367px;background:#2a2a2a;"></div>
<div class="t" style="left:792.0px;width:1200px;text-align:center;top:338.1px;font-size:14.45px;line-height:14.45px;color:#fff;font-weight:400;">Debe seleccionar al menos un año en el selector "Año hidrológico" situado en la parte superior derecha del dashboard.</div>
<div class="t" style="left:792.0px;width:1200px;text-align:center;top:357.5px;font-size:14.4px;line-height:14.4px;color:#fff;font-weight:400;">De forma adicional, se pueden filtrar los datos por uso, desde el selector "Uso"</div>
<div class="r" style="left:1008px;top:539px;width:201px;height:33px;background:#8d8a88;"></div>
<div class="r" style="left:1009px;top:539px;width:199px;height:31px;background:#2a2a2a;"></div>
<div class="r" style="left:1008px;top:570px;width:201px;height:2px;background:#fff;"></div>
<div class="t" style="left:508.5px;width:1200px;text-align:center;top:549.3px;font-size:14.0px;line-height:14.0px;color:#c4c4c4;font-weight:400;">Reserva hídrica peninsular</div>
<div class="r" style="left:1217px;top:539px;width:1px;height:33px;background:#8d8a88;"></div>
<div class="r" style="left:1460px;top:539px;width:1px;height:33px;background:#8d8a88;"></div>
<div class="r" style="left:1217px;top:570px;width:244px;height:2px;background:#2a2420;"></div>
<div class="t" style="left:739.0px;width:1200px;text-align:center;top:549.2px;font-size:14.18px;line-height:14.18px;color:#ececec;font-weight:400;">Reserva hídrica por demarcación</div>
<div class="r" style="left:1469px;top:539px;width:1px;height:33px;background:#8d8a88;"></div>
<div class="r" style="left:1683px;top:539px;width:1px;height:33px;background:#8d8a88;"></div>
<div class="r" style="left:1469px;top:570px;width:215px;height:2px;background:#2a2420;"></div>
<div class="t" style="left:976.5px;width:1200px;text-align:center;top:549.3px;font-size:14.1px;line-height:14.1px;color:#ececec;font-weight:400;">Reserva hídrica por embalse</div>
<div class="r" style="left:992px;top:581px;width:801px;height:368px;background:#8d8a88;"></div>
<div class="r" style="left:993px;top:582px;width:799px;height:366px;background:#2a2a2a;"></div>
<svg style="left:993px;top:582px" width="799" height="366" viewBox="993 582 799 366">
<line x1="1083" y1="652.5" x2="1758" y2="652.5" stroke="#3d3d3d" stroke-width="1"/>
<line x1="1083" y1="687.3" x2="1758" y2="687.3" stroke="#3d3d3d" stroke-width="1"/>
<line x1="1083" y1="722.0" x2="1758" y2="722.0" stroke="#3d3d3d" stroke-width="1"/>
<line x1="1083" y1="756.8" x2="1758" y2="756.8" stroke="#3d3d3d" stroke-width="1"/>
<line x1="1083" y1="791.5" x2="1758" y2="791.5" stroke="#3d3d3d" stroke-width="1"/>
<line x1="1083" y1="826.3" x2="1758" y2="826.3" stroke="#3d3d3d" stroke-width="1"/>
<line x1="1083" y1="861.0" x2="1758" y2="861.0" stroke="#3d3d3d" stroke-width="1"/>
<line x1="1127.5" y1="618" x2="1127.5" y2="901" stroke="#3d3d3d" stroke-width="1"/>
<line x1="1222.4" y1="618" x2="1222.4" y2="901" stroke="#3d3d3d" stroke-width="1"/>
<line x1="1317.3" y1="618" x2="1317.3" y2="901" stroke="#3d3d3d" stroke-width="1"/>
<line x1="1412.2" y1="618" x2="1412.2" y2="901" stroke="#3d3d3d" stroke-width="1"/>
<line x1="1507.1" y1="618" x2="1507.1" y2="901" stroke="#3d3d3d" stroke-width="1"/>
<line x1="1602.0" y1="618" x2="1602.0" y2="901" stroke="#3d3d3d" stroke-width="1"/>
<line x1="1696.9" y1="618" x2="1696.9" y2="901" stroke="#3d3d3d" stroke-width="1"/>
<line x1="1089.5" y1="618" x2="1089.5" y2="896" stroke="#5a5a5a" stroke-width="1"/>
<line x1="1083" y1="895.8" x2="1758" y2="895.8" stroke="#5a5a5a" stroke-width="1"/>
<path d="M1089.4 801.2 C1089.6 795.6 1090.2 774.7 1090.8 770.1 C1091.4 765.5 1092.1 774.2 1092.8 775.7 C1093.4 777.3 1093.5 782.4 1094.2 778.6 C1094.8 774.7 1095.5 759.3 1096.4 754.5 C1097.4 749.6 1098.4 744.8 1099.3 751.6 C1100.1 758.5 1100.4 779.7 1101.3 792.7 C1102.1 805.8 1102.6 815.8 1104.1 823.9 C1105.6 832.1 1108.1 841.7 1109.8 838.1 C1111.4 834.5 1112.2 810.5 1113.4 804.1 C1114.7 797.7 1115.7 797.1 1116.8 802.7 C1118.0 808.3 1118.4 825.1 1119.7 835.3 C1121.0 845.5 1122.7 871.1 1123.9 859.4 C1125.2 847.6 1125.9 789.5 1126.8 770.1 C1127.6 750.7 1128.0 752.7 1128.8 751.6 C1129.5 750.6 1130.1 763.1 1131.0 764.4 C1131.9 765.7 1133.0 758.2 1133.9 758.7 C1134.7 759.2 1134.6 754.5 1135.8 767.2 C1137.1 780.0 1139.5 820.4 1140.9 829.6 C1142.4 838.8 1142.8 822.8 1143.8 818.3 C1144.8 813.7 1145.4 815.8 1146.6 804.1 C1147.8 792.3 1149.3 762.0 1150.3 753.1 C1151.3 744.1 1151.4 751.4 1152.3 754.5 C1153.1 757.5 1153.6 755.3 1155.1 770.1 C1156.6 784.9 1159.3 826.5 1160.8 836.7 C1162.3 846.9 1162.1 828.5 1163.6 826.8 C1165.1 825.0 1167.8 830.3 1169.3 826.8 C1170.8 823.2 1171.1 811.3 1172.1 806.9 C1173.1 802.6 1173.7 797.3 1175.0 802.7 C1176.2 808.0 1177.7 833.4 1179.2 836.7 C1180.7 840.0 1182.2 823.4 1183.5 821.1 C1184.7 818.8 1185.3 824.4 1186.3 823.9 C1187.3 823.4 1188.0 822.8 1189.1 818.3 C1190.2 813.7 1191.3 794.1 1192.5 798.4 C1193.8 802.7 1194.8 840.1 1196.2 842.3 C1197.6 844.6 1199.4 815.5 1200.5 811.2 C1201.5 806.8 1201.1 821.3 1201.9 818.3 C1202.6 815.2 1203.8 800.0 1204.7 794.2 C1205.6 788.3 1206.2 785.9 1207.0 785.7 C1207.7 785.4 1208.3 793.8 1209.0 792.7 C1209.7 791.7 1210.2 779.0 1211.0 780.0 C1211.7 781.0 1212.0 786.7 1213.2 798.4 C1214.4 810.1 1216.2 838.8 1217.5 845.2 C1218.7 851.6 1218.9 840.5 1220.3 833.8 C1221.7 827.2 1223.6 810.1 1225.1 808.3 C1226.7 806.5 1227.4 815.5 1228.8 823.9 C1230.2 832.3 1231.5 845.9 1233.1 855.1 C1234.6 864.3 1235.9 875.5 1237.3 874.9 C1238.7 874.4 1240.0 879.3 1241.0 852.3 C1242.0 825.2 1242.3 747.9 1243.0 724.7 C1243.7 701.5 1243.9 726.6 1245.0 723.3 C1246.0 720.0 1247.7 708.1 1248.7 706.3 C1249.6 704.5 1249.5 708.5 1250.0 713.4 C1250.5 718.2 1251.0 725.1 1251.5 733.2 C1252.0 741.4 1251.8 749.0 1252.8 758.7 C1253.8 768.4 1256.3 782.0 1257.1 787.1 C1257.9 792.2 1256.6 799.3 1257.2 787.1 C1257.7 774.8 1259.1 735.9 1259.9 719.0 C1260.8 702.2 1261.1 697.9 1261.9 693.5 C1262.7 689.2 1263.4 692.7 1264.2 695.0 C1265.0 697.3 1265.5 704.3 1266.4 706.3 C1267.4 708.3 1268.3 700.4 1269.3 706.3 C1270.3 712.2 1271.0 729.7 1272.1 738.9 C1273.2 748.1 1274.4 767.0 1275.5 757.3 C1276.6 747.6 1277.4 699.3 1278.3 685.0 C1279.3 670.7 1279.7 677.7 1280.6 677.9 C1281.5 678.2 1282.3 687.7 1283.4 686.5 C1284.6 685.2 1285.7 665.0 1286.8 670.9 C1288.0 676.7 1288.7 704.8 1289.7 719.0 C1290.7 733.3 1291.1 742.8 1292.5 750.2 C1293.9 757.6 1295.8 762.7 1297.6 760.1 C1299.4 757.6 1301.1 741.2 1302.4 736.1 C1303.8 731.0 1304.3 725.7 1305.3 731.8 C1306.3 737.9 1306.9 756.8 1308.1 770.1 C1309.3 783.3 1310.6 804.0 1311.8 805.5 C1313.0 807.0 1313.5 784.4 1314.6 778.6 C1315.7 772.7 1316.8 773.4 1318.0 772.9 C1319.3 772.4 1320.3 784.4 1321.4 775.7 C1322.6 767.1 1323.3 732.4 1324.3 724.7 C1325.2 717.1 1325.2 717.9 1326.5 733.2 C1327.9 748.5 1330.1 807.2 1331.6 809.8 C1333.2 812.3 1334.2 764.2 1335.0 747.4 C1335.9 730.6 1335.5 729.7 1336.5 716.2 C1337.4 702.7 1339.0 678.9 1340.1 672.3 C1341.3 665.6 1341.8 670.4 1343.0 679.4 C1344.1 688.3 1345.2 707.1 1346.4 721.9 C1347.5 736.7 1347.8 752.1 1349.2 761.6 C1350.6 771.0 1352.5 776.9 1354.3 774.3 C1356.1 771.8 1357.7 754.8 1359.1 747.4 C1360.5 740.0 1360.9 732.2 1362.0 733.2 C1363.0 734.2 1363.6 742.6 1364.8 753.1 C1366.0 763.5 1367.3 786.2 1368.5 791.3 C1369.7 796.4 1370.2 796.7 1371.3 781.4 C1372.4 766.1 1373.6 723.1 1374.7 706.3 C1375.8 689.5 1376.5 693.7 1377.6 687.9 C1378.6 682.0 1379.4 671.7 1380.4 673.7 C1381.4 675.7 1381.8 684.4 1383.2 699.2 C1384.6 714.0 1386.8 752.3 1388.3 755.9 C1389.9 759.5 1390.6 728.2 1391.7 719.0 C1392.8 709.9 1393.0 711.8 1394.6 704.9 C1396.1 698.0 1398.4 677.2 1400.2 680.8 C1402.0 684.4 1403.2 710.2 1404.5 724.7 C1405.8 739.3 1406.3 756.5 1407.3 761.6 C1408.3 766.7 1408.9 754.6 1410.1 753.1 C1411.4 751.5 1413.0 755.1 1414.4 753.1 C1415.8 751.0 1416.5 740.7 1417.8 741.7 C1419.1 742.7 1420.1 745.0 1421.5 758.7 C1422.9 772.5 1424.2 811.6 1425.7 818.3 C1427.3 824.9 1428.7 801.7 1429.9 795.6 C1431.2 789.5 1431.9 792.4 1432.8 784.2 C1433.6 776.1 1433.9 757.4 1434.7 750.2 C1435.6 743.1 1436.6 741.0 1437.6 744.6 C1438.6 748.1 1439.1 756.8 1440.4 770.1 C1441.7 783.3 1443.5 816.2 1444.7 818.3 C1445.8 820.3 1446.2 793.7 1446.9 781.4 C1447.7 769.2 1448.2 754.8 1448.9 750.2 C1449.6 745.6 1449.9 757.9 1450.6 755.9 C1451.3 753.9 1451.9 742.5 1452.6 738.9 C1453.3 735.3 1453.7 739.6 1454.6 736.1 C1455.5 732.5 1456.5 713.9 1457.7 719.0 C1458.9 724.1 1460.0 751.1 1461.1 764.4 C1462.2 777.7 1462.9 785.1 1463.9 792.7 C1465.0 800.4 1465.5 805.9 1466.8 806.9 C1468.0 807.9 1469.6 807.1 1471.0 798.4 C1472.4 789.7 1473.2 769.7 1474.4 758.7 C1475.6 747.8 1476.4 734.4 1477.5 737.5 C1478.7 740.5 1479.8 763.7 1480.9 775.7 C1482.1 787.7 1482.5 802.6 1483.8 804.1 C1485.1 805.6 1486.9 795.0 1488.0 784.2 C1489.2 773.5 1489.3 754.0 1490.3 744.6 C1491.3 735.1 1492.7 733.8 1493.7 731.8 C1494.7 729.8 1494.9 725.3 1496.0 733.2 C1497.0 741.1 1498.0 762.2 1499.4 775.7 C1500.7 789.3 1502.5 805.3 1503.6 808.3 C1504.7 811.4 1504.8 808.8 1505.6 792.7 C1506.4 776.7 1507.0 744.0 1507.9 719.0 C1508.8 694.0 1509.6 667.9 1510.7 653.9 C1511.8 639.8 1512.8 637.5 1514.1 641.1 C1515.4 644.7 1516.6 661.7 1517.8 673.7 C1519.0 685.7 1519.6 700.8 1520.6 707.7 C1521.6 714.6 1522.4 719.6 1523.5 712.0 C1524.5 704.3 1525.3 676.4 1526.3 665.2 C1527.3 654.0 1528.0 653.2 1529.1 649.6 C1530.3 646.0 1531.5 639.0 1532.8 645.4 C1534.1 651.7 1534.7 669.0 1536.2 685.0 C1537.7 701.1 1540.0 727.5 1541.3 734.6 C1542.6 741.8 1541.9 726.8 1543.3 724.7 C1544.7 722.7 1547.4 726.6 1549.0 723.3 C1550.5 720.0 1550.6 702.0 1551.8 706.3 C1553.0 710.6 1554.0 732.1 1555.5 747.4 C1557.0 762.7 1558.9 790.6 1560.3 791.3 C1561.7 792.1 1562.1 765.7 1563.1 751.6 C1564.2 737.6 1565.1 731.5 1566.0 713.4 C1566.8 695.3 1567.2 665.3 1568.0 651.0 C1568.7 636.7 1569.3 635.8 1570.2 634.0 C1571.1 632.2 1571.9 629.9 1573.1 641.1 C1574.2 652.3 1575.5 682.9 1576.7 696.4 C1578.0 709.9 1578.8 724.9 1580.1 716.2 C1581.5 707.5 1582.9 661.7 1584.4 648.2 C1585.9 634.7 1587.1 635.5 1588.7 641.1 C1590.2 646.7 1591.5 664.8 1592.9 679.4 C1594.3 693.9 1595.0 718.3 1596.3 721.9 C1597.6 725.5 1598.9 704.8 1599.9 699.2 C1600.9 693.6 1601.0 696.3 1601.9 690.7 C1602.8 685.1 1603.6 673.9 1604.7 668.0 C1605.9 662.2 1607.4 656.6 1608.4 658.1 C1609.4 659.6 1609.6 666.6 1610.4 676.5 C1611.2 686.5 1611.7 700.1 1612.7 713.4 C1613.7 726.6 1615.1 744.6 1616.1 750.2 C1617.1 755.8 1617.5 745.1 1618.3 744.6 C1619.2 744.0 1620.0 752.5 1620.6 747.4 C1621.2 742.3 1621.1 724.4 1621.7 716.2 C1622.4 708.0 1622.8 709.9 1624.0 702.0 C1625.2 694.1 1627.0 672.8 1628.3 672.3 C1629.5 671.8 1630.2 688.7 1631.1 699.2 C1632.0 709.7 1632.1 716.4 1633.1 730.4 C1634.1 744.4 1635.4 770.5 1636.8 777.2 C1638.1 783.8 1639.4 774.1 1640.5 767.2 C1641.5 760.3 1641.6 745.0 1642.4 738.9 C1643.3 732.8 1644.3 732.2 1645.3 733.2 C1646.3 734.2 1646.8 731.8 1648.1 744.6 C1649.4 757.3 1650.8 790.1 1652.4 804.1 C1653.9 818.1 1655.2 823.5 1656.6 822.5 C1658.0 821.5 1658.9 822.6 1660.3 798.4 C1661.7 774.2 1663.0 708.8 1664.3 687.9 C1665.5 667.0 1666.2 677.6 1667.1 682.2 C1668.0 686.8 1668.2 699.1 1669.4 713.4 C1670.5 727.7 1672.3 754.4 1673.6 761.6 C1674.9 768.7 1675.4 757.1 1676.5 753.1 C1677.5 749.0 1678.3 742.0 1679.3 738.9 C1680.3 735.8 1681.2 737.8 1682.1 736.1 C1683.0 734.3 1683.4 724.9 1684.4 729.0 C1685.4 733.0 1686.3 744.2 1687.8 758.7 C1689.3 773.3 1691.1 812.3 1692.6 809.8 C1694.1 807.2 1695.0 758.1 1696.3 744.6 C1697.6 731.0 1698.7 741.5 1700.0 734.6 C1701.3 727.7 1702.3 708.6 1703.4 706.3 C1704.5 704.0 1704.8 707.3 1706.2 721.9 C1707.6 736.4 1709.8 778.9 1711.3 787.1 C1712.8 795.2 1713.3 780.2 1714.7 767.2 C1716.1 754.2 1717.7 721.4 1719.0 714.8 C1720.2 708.2 1720.6 722.5 1721.8 730.4 C1723.0 738.3 1724.2 746.0 1725.5 758.7 C1726.8 771.5 1727.8 791.8 1728.9 801.2 C1730.0 810.7 1730.6 813.5 1731.7 811.2 C1732.8 808.9 1734.1 791.8 1735.1 788.5 C1736.1 785.2 1736.2 796.6 1737.4 792.7 C1738.6 788.9 1740.2 766.2 1741.6 767.2 C1743.1 768.3 1744.0 785.1 1745.3 798.4 C1746.7 811.7 1747.9 842.0 1749.3 840.9 C1750.7 839.9 1752.0 806.5 1753.0 792.7 C1754.0 779.0 1753.9 769.5 1755.0 764.4 C1756.0 759.3 1758.0 764.4 1758.7 764.4" fill="none" stroke="#5899d2" stroke-width="1.6" stroke-linejoin="round"/>
<rect x="1089" y="602" width="670" height="16" fill="#7a7a7a"/>
<circle cx="1089.2" cy="609.7" r="9" fill="#fff"/>
<line x1="1087.7" y1="605" x2="1087.7" y2="614.5" stroke="#888" stroke-width="0.8"/>
<line x1="1090.7" y1="605" x2="1090.7" y2="614.5" stroke="#888" stroke-width="0.8"/>
<circle cx="1758.6" cy="609.7" r="9" fill="#fff"/>
<line x1="1757.1" y1="605" x2="1757.1" y2="614.5" stroke="#888" stroke-width="0.8"/>
<line x1="1760.1" y1="605" x2="1760.1" y2="614.5" stroke="#888" stroke-width="0.8"/>
</svg>
<div class="t" style="left:-123.7px;width:1200px;text-align:right;top:612.6px;font-size:11.05px;line-height:11.05px;color:#fff;font-weight:400;">50.000</div>
<div class="t" style="left:-123.7px;width:1200px;text-align:right;top:647.4px;font-size:11.05px;line-height:11.05px;color:#fff;font-weight:400;">45.000</div>
<div class="t" style="left:-123.7px;width:1200px;text-align:right;top:682.1px;font-size:11.05px;line-height:11.05px;color:#fff;font-weight:400;">40.000</div>
<div class="t" style="left:-123.7px;width:1200px;text-align:right;top:716.9px;font-size:11.05px;line-height:11.05px;color:#fff;font-weight:400;">35.000</div>
<div class="t" style="left:-123.7px;width:1200px;text-align:right;top:751.6px;font-size:11.05px;line-height:11.05px;color:#fff;font-weight:400;">30.000</div>
<div class="t" style="left:-123.7px;width:1200px;text-align:right;top:786.4px;font-size:11.05px;line-height:11.05px;color:#fff;font-weight:400;">25.000</div>
<div class="t" style="left:-123.7px;width:1200px;text-align:right;top:821.1px;font-size:11.05px;line-height:11.05px;color:#fff;font-weight:400;">20.000</div>
<div class="t" style="left:-123.7px;width:1200px;text-align:right;top:855.9px;font-size:11.05px;line-height:11.05px;color:#fff;font-weight:400;">15.000</div>
<div class="t" style="left:-123.7px;width:1200px;text-align:right;top:890.6px;font-size:11.05px;line-height:11.05px;color:#fff;font-weight:400;">10.000</div>
<div class="t" style="left:542.7px;width:1200px;text-align:center;top:904.7px;font-size:11.3px;line-height:11.3px;color:#fff;font-weight:400;">1990</div>
<div class="t" style="left:637.5px;width:1200px;text-align:center;top:904.7px;font-size:11.3px;line-height:11.3px;color:#fff;font-weight:400;">1995</div>
<div class="t" style="left:732.2px;width:1200px;text-align:center;top:904.7px;font-size:11.3px;line-height:11.3px;color:#fff;font-weight:400;">2000</div>
<div class="t" style="left:827.0px;width:1200px;text-align:center;top:904.7px;font-size:11.3px;line-height:11.3px;color:#fff;font-weight:400;">2005</div>
<div class="t" style="left:921.7px;width:1200px;text-align:center;top:904.7px;font-size:11.3px;line-height:11.3px;color:#fff;font-weight:400;">2010</div>
<div class="t" style="left:1016.5px;width:1200px;text-align:center;top:904.7px;font-size:11.3px;line-height:11.3px;color:#fff;font-weight:400;">2015</div>
<div class="t" style="left:1111.2px;width:1200px;text-align:center;top:904.7px;font-size:11.3px;line-height:11.3px;color:#fff;font-weight:400;">2020</div>
<div class="t" style="left:823.5px;width:1200px;text-align:center;top:924.2px;font-size:13.0px;line-height:13.0px;color:#fff;font-weight:700;">Año</div>
<div class="t" style="left:426.5px;width:1200px;text-align:center;top:750.0px;font-size:12.4px;line-height:12.4px;color:#fff;font-weight:700;transform:rotate(-90deg);transform-origin:600px 50%;">hm<sup style="font-size:0.62em;position:relative;top:-0.3em;vertical-align:top;margin-left:1px">3</sup></div>
<div class="r" style="left:1749px;top:641px;width:60px;height:26px;background:linear-gradient(90deg,#a2abb5,#a3b6c6);border-radius:4px 0 0 4px;overflow:hidden"><div class="t" style="left:12.8px;top:6px;font-size:14.2px;line-height:14.2px;color:#0c0c10">GitKraken</div></div>
<div class="r" style="left:1008px;top:948px;width:154px;height:34px;background:#8d8a88;"></div>
<div class="r" style="left:1009px;top:948px;width:152px;height:32px;background:#2a2a2a;"></div>
<div class="r" style="left:1008px;top:980px;width:154px;height:2px;background:#fff;"></div>
<div class="t" style="left:485.0px;width:1200px;text-align:center;top:958.1px;font-size:14.25px;line-height:14.25px;color:#c4c4c4;font-weight:400;">Evolución histórica</div>
<div class="r" style="left:1170px;top:948px;width:1px;height:34px;background:#8d8a88;"></div>
<div class="r" style="left:1340px;top:948px;width:1px;height:34px;background:#8d8a88;"></div>
<div class="r" style="left:1170px;top:980px;width:171px;height:2px;background:#2a2420;"></div>
<div class="t" style="left:655.5px;width:1200px;text-align:center;top:958.0px;font-size:14.39px;line-height:14.39px;color:#ececec;font-weight:400;">Variación en volumen</div>
<div class="r" style="left:1349px;top:948px;width:1px;height:34px;background:#8d8a88;"></div>
<div class="r" style="left:1617px;top:948px;width:1px;height:34px;background:#8d8a88;"></div>
<div class="r" style="left:1349px;top:980px;width:269px;height:2px;background:#2a2420;"></div>
<div class="t" style="left:883.5px;width:1200px;text-align:center;top:957.9px;font-size:14.48px;line-height:14.48px;color:#ececec;font-weight:400;">Variación en porcentaje por embalse</div>
<div class="r" style="left:20px;top:991px;width:1782px;height:1px;background:#2a4aa8;"></div>
<div class="r" style="left:36px;top:991px;width:131px;height:33px;background:#2a4aa8;"></div>
<div class="r" style="left:37px;top:991px;width:129px;height:31px;background:#4b84a9;"></div>
<div class="r" style="left:37px;top:1022px;width:129px;height:2px;background:#3d74c4;"></div>
<div class="t" style="left:-498.5px;width:1200px;text-align:center;top:1000.6px;font-size:13.74px;line-height:13.74px;color:#e8e8e8;font-weight:400;">Reserva hídrica</div>
<div class="r" style="left:175px;top:991px;width:204px;height:33px;background:#2a4aa8;"></div>
<div class="r" style="left:176px;top:992px;width:202px;height:30px;background:#62a6e0;"></div>
<div class="r" style="left:175px;top:1022px;width:204px;height:2px;background:#0f1b62;"></div>
<div class="t" style="left:-323.0px;width:1200px;text-align:center;top:999.9px;font-size:14.54px;line-height:14.54px;color:#1c1c1c;font-weight:400;">Energía teórica producible</div>
<div class="r" style="left:387px;top:991px;width:217px;height:33px;background:#2a4aa8;"></div>
<div class="r" style="left:388px;top:992px;width:215px;height:30px;background:#62a6e0;"></div>
<div class="r" style="left:387px;top:1022px;width:217px;height:2px;background:#0f1b62;"></div>
<div class="t" style="left:-104.5px;width:1200px;text-align:center;top:1000.3px;font-size:14.1px;line-height:14.1px;color:#1c1c1c;font-weight:400;">Caudales medios semanales</div>
<div class="r" style="left:611px;top:991px;width:110px;height:33px;background:#2a4aa8;"></div>
<div class="r" style="left:612px;top:992px;width:108px;height:30px;background:#62a6e0;"></div>
<div class="r" style="left:611px;top:1022px;width:110px;height:2px;background:#0f1b62;"></div>
<div class="t" style="left:66.0px;width:1200px;text-align:center;top:1000.5px;font-size:13.87px;line-height:13.87px;color:#1c1c1c;font-weight:400;">Piezometría</div>
<div class="r" style="left:728px;top:991px;width:247px;height:33px;background:#2a4aa8;"></div>
<div class="r" style="left:729px;top:992px;width:245px;height:30px;background:#62a6e0;"></div>
<div class="r" style="left:728px;top:1022px;width:247px;height:2px;background:#0f1b62;"></div>
<div class="t" style="left:251.5px;width:1200px;text-align:center;top:1000.2px;font-size:14.18px;line-height:14.18px;color:#1c1c1c;font-weight:400;">Precipitación acumulada semanal</div>
<div class="r" style="left:983px;top:991px;width:75px;height:33px;background:#2a4aa8;"></div>
<div class="r" style="left:984px;top:992px;width:73px;height:30px;background:#62a6e0;"></div>
<div class="r" style="left:983px;top:1022px;width:75px;height:2px;background:#0f1b62;"></div>
<div class="t" style="left:420.5px;width:1200px;text-align:center;top:999.9px;font-size:14.48px;line-height:14.48px;color:#1c1c1c;font-weight:400;">Ayuda</div>
<div class="r" style="left:1066px;top:991px;width:75px;height:33px;background:#2a4aa8;"></div>
<div class="r" style="left:1067px;top:992px;width:73px;height:30px;background:#62a6e0;"></div>
<div class="r" style="left:1066px;top:1022px;width:75px;height:2px;background:#0f1b62;"></div>
<div class="t" style="left:503.5px;width:1200px;text-align:center;top:1000.5px;font-size:13.84px;line-height:13.84px;color:#1c1c1c;font-weight:400;">Avisos</div>
<div class="r" style="left:1149px;top:991px;width:92px;height:33px;background:#2a4aa8;"></div>
<div class="r" style="left:1150px;top:992px;width:90px;height:30px;background:#62a6e0;"></div>
<div class="r" style="left:1149px;top:1022px;width:92px;height:2px;background:#0f1b62;"></div>
<div class="t" style="left:595.0px;width:1200px;text-align:center;top:999.9px;font-size:14.57px;line-height:14.57px;color:#1c1c1c;font-weight:400;">Contacto</div>
<div class="r" style="left:20px;top:478px;width:20px;height:198px;background:#ffffff;"></div>
<svg style="left:26px;top:571px" width="10" height="12" viewBox="0 0 10 12"><path d="M2 1 L8 6 L2 11 Z" fill="#6e6e6e"/></svg>
</body></html>
